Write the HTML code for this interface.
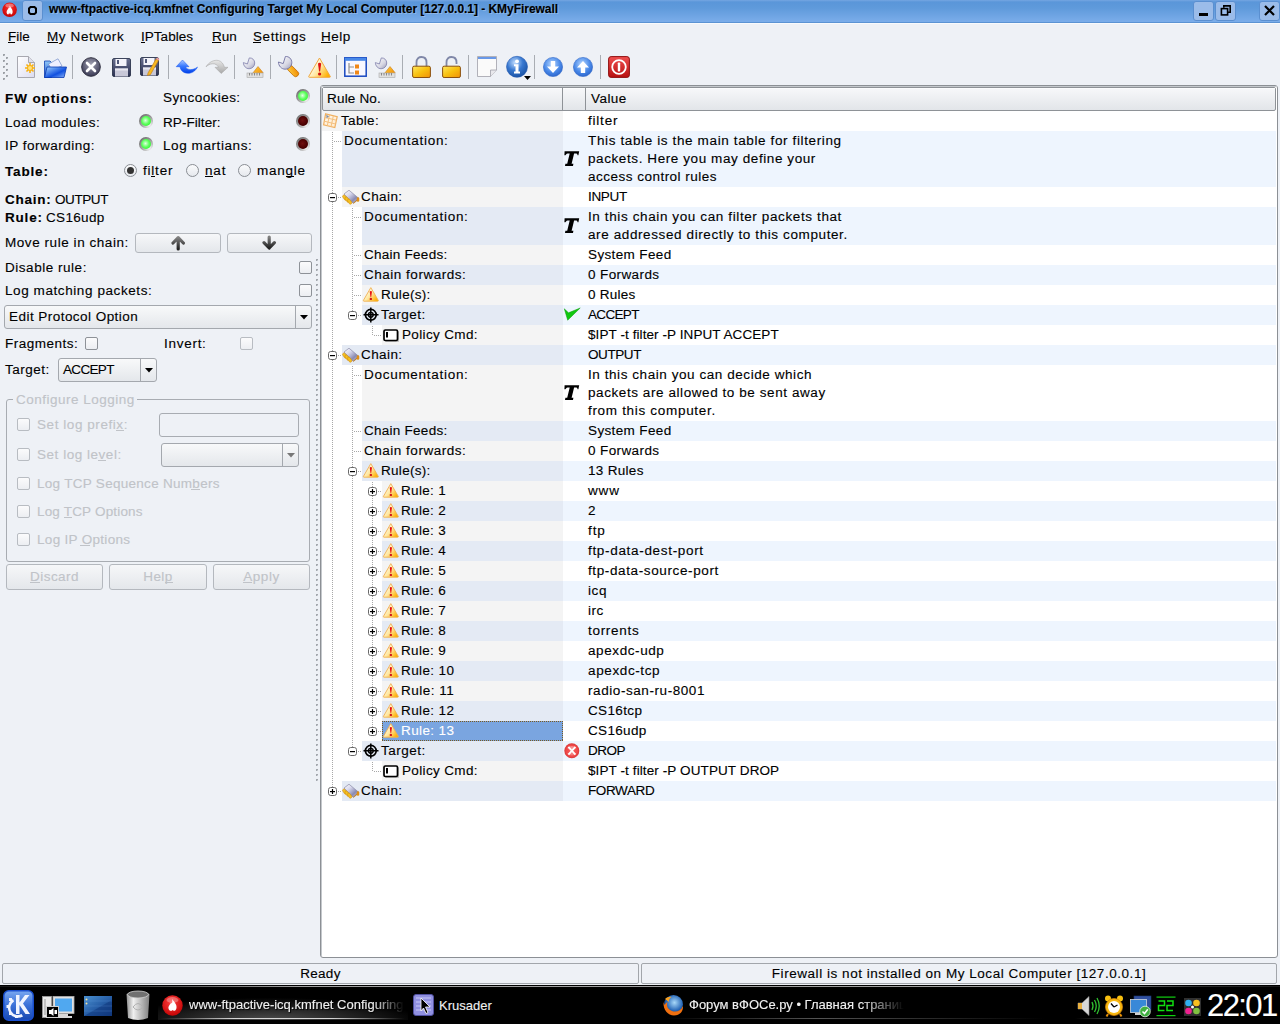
<!DOCTYPE html><html><head><meta charset="utf-8"><style>html,body{margin:0;padding:0;width:1280px;height:1024px;overflow:hidden;background:#eef1f6;font-family:"Liberation Sans",sans-serif;position:relative}div,svg{position:absolute}div{-webkit-text-stroke:0.12px currentColor}</style></head><body>
<div style="position:absolute;left:0px;top:0px;width:1280px;height:22px;background:linear-gradient(#75a6e2 0px,#5a96d9 2px,#5f9adb 8px,#7badea 22px)"></div>
<div style="position:absolute;left:0px;top:22px;width:1280px;height:1px;background:#5b93d3"></div>
<div style="position:absolute;left:0px;top:23px;width:1280px;height:1px;background:#f9fafc"></div>
<svg style="position:absolute;left:2px;top:2px" width="16" height="16" viewBox="0 0 16 16"><defs><radialGradient id="rg1" cx="0.5" cy="0.35" r="0.7"><stop offset="0" stop-color="#ff3030"/><stop offset="1" stop-color="#c00000"/></radialGradient></defs><circle cx="7.6" cy="7.8" r="7.3" fill="url(#rg1)"/><ellipse cx="7.6" cy="3.6" rx="4.2" ry="2" fill="#fff" opacity="0.35"/><path d="M7.6 3.6 C8.8 6 11 7.5 10.6 10.5 C10.3 12.5 9 12.8 8.4 12 L8.2 10.5 L7.6 12.2 L7 10.5 L6.8 12 C6.2 12.8 4.9 12.5 4.6 10.5 C4.3 8 6.5 7 6.8 5.5 C7.2 6.5 7.8 5.5 7.6 3.6Z" fill="#fff"/></svg>
<div style="position:absolute;left:22px;top:0px;width:21px;height:21px;background:#9bbce9;border:1px solid #5a8fd0;border-radius:3px;box-sizing:border-box"></div>
<svg style="position:absolute;left:28px;top:6px" width="9" height="9" viewBox="0 0 9 9"><path d="M2.5 1H6.5L8 2.5V6.5L6.5 8H2.5L1 6.5V2.5Z" fill="none" stroke="#000" stroke-width="2"/></svg>
<div style="position:absolute;left:49.00px;top:1.03px;font-size:12px;line-height:16px;font-weight:bold;color:#000;letter-spacing:0.000px;white-space:pre;letter-spacing:-0.04px;text-shadow:1px 1px 0 rgba(255,255,255,0.25)">www-ftpactive-icq.kmfnet Configuring Target My Local Computer [127.0.0.1] - KMyFirewall</div>
<div style="position:absolute;left:1193px;top:1px;width:21px;height:20px;background:#9bbce9;border:1px solid #5a8fd0;border-radius:3px;box-sizing:border-box"></div>
<div style="position:absolute;left:1215px;top:1px;width:21px;height:20px;background:#9bbce9;border:1px solid #5a8fd0;border-radius:3px;box-sizing:border-box"></div>
<div style="position:absolute;left:1259px;top:1px;width:21px;height:20px;background:#9bbce9;border:1px solid #5a8fd0;border-radius:3px;box-sizing:border-box"></div>
<div style="position:absolute;left:1199px;top:13px;width:9px;height:3px;background:#000"></div>
<svg style="position:absolute;left:1220px;top:5px" width="12" height="11" viewBox="0 0 12 11"><path d="M3.8 2.8V0.9H10.2V7.2H8" fill="none" stroke="#000" stroke-width="1.6"/><rect x="1.4" y="3.6" width="6.2" height="6.3" fill="none" stroke="#000" stroke-width="1.6"/></svg>
<svg style="position:absolute;left:1264px;top:5px" width="11" height="11" viewBox="0 0 11 11"><path d="M1 1L10 10M10 1L1 10" stroke="#000" stroke-width="2.2"/></svg>
<div style="position:absolute;left:8.00px;top:28.53px;font-size:13.52px;line-height:16px;font-weight:normal;color:#000;letter-spacing:-0.004px;white-space:pre;">File</div>
<div style="position:absolute;left:47.00px;top:28.53px;font-size:13.52px;line-height:16px;font-weight:normal;color:#000;letter-spacing:0.594px;white-space:pre;">My Network</div>
<div style="position:absolute;left:141.00px;top:28.53px;font-size:13.52px;line-height:16px;font-weight:normal;color:#000;letter-spacing:0.027px;white-space:pre;">IPTables</div>
<div style="position:absolute;left:212.00px;top:28.53px;font-size:13.52px;line-height:16px;font-weight:normal;color:#000;letter-spacing:0.042px;white-space:pre;">Run</div>
<div style="position:absolute;left:253.00px;top:28.53px;font-size:13.52px;line-height:16px;font-weight:normal;color:#000;letter-spacing:0.559px;white-space:pre;">Settings</div>
<div style="position:absolute;left:321.00px;top:28.53px;font-size:13.52px;line-height:16px;font-weight:normal;color:#000;letter-spacing:0.461px;white-space:pre;">Help</div>
<div style="position:absolute;left:8px;top:42px;width:7px;height:1px;background:#000"></div>
<div style="position:absolute;left:47px;top:42px;width:11px;height:1px;background:#000"></div>
<div style="position:absolute;left:141px;top:42px;width:4px;height:1px;background:#000"></div>
<div style="position:absolute;left:212px;top:42px;width:9px;height:1px;background:#000"></div>
<div style="position:absolute;left:253px;top:42px;width:8px;height:1px;background:#000"></div>
<div style="position:absolute;left:321px;top:42px;width:10px;height:1px;background:#000"></div>
<div style="position:absolute;left:72px;top:55px;width:1px;height:24px;background:#a9adb3"></div>
<div style="position:absolute;left:168px;top:55px;width:1px;height:24px;background:#a9adb3"></div>
<div style="position:absolute;left:234px;top:55px;width:1px;height:24px;background:#a9adb3"></div>
<div style="position:absolute;left:270px;top:55px;width:1px;height:24px;background:#a9adb3"></div>
<div style="position:absolute;left:336px;top:55px;width:1px;height:24px;background:#a9adb3"></div>
<div style="position:absolute;left:402px;top:55px;width:1px;height:24px;background:#a9adb3"></div>
<div style="position:absolute;left:468px;top:55px;width:1px;height:24px;background:#a9adb3"></div>
<div style="position:absolute;left:534px;top:55px;width:1px;height:24px;background:#a9adb3"></div>
<div style="position:absolute;left:600px;top:55px;width:1px;height:24px;background:#a9adb3"></div>
<svg style="position:absolute;left:17px;top:56px;overflow:visible" width="18" height="22" viewBox="0 0 18 22"><defs><linearGradient id="g1" x1="0" y1="0" x2="1" y2="1"><stop offset="0" stop-color="#ffffff"/><stop offset="1" stop-color="#dcdcf0"/></linearGradient></defs><path d="M0.5 0.5 H11.5 L17.5 6.5 V21.5 H0.5Z" fill="url(#g1)" stroke="#a8a8b0"/><path d="M11.5 0.5 V6.5 H17.5" fill="#e0e0ea" stroke="#a8a8b0"/><g transform="translate(13,12)"><circle r="3" fill="#f8c020"/><path d="M0 -5V5M-5 0H5M-3.5 -3.5L3.5 3.5M3.5 -3.5L-3.5 3.5" stroke="#f8b010" stroke-width="1.6"/><circle r="2" fill="#ffe080"/></g></svg>
<svg style="position:absolute;left:44px;top:58px;overflow:visible" width="23" height="20" viewBox="0 0 23 20"><defs><linearGradient id="g2" x1="0" y1="0" x2="0" y2="1"><stop offset="0" stop-color="#90c8f8"/><stop offset="1" stop-color="#1848c8"/></linearGradient><linearGradient id="g3" x1="0" y1="0" x2="1" y2="1"><stop offset="0" stop-color="#a8d8ff"/><stop offset="0.6" stop-color="#1050e0"/><stop offset="1" stop-color="#90b8f8"/></linearGradient></defs><path d="M0.5 3 H6 L7.5 4.5 V19.5 H0.5Z" fill="url(#g2)" stroke="#1040b0" stroke-width="0.8"/><path d="M4.5 6 L14 0.8 L18 8 L8 12Z" fill="#f0f0ff" stroke="#6080c0" stroke-width="0.6"/><path d="M3 9 H22.5 L20 19.5 H0.5Z" fill="url(#g3)" stroke="#0838b0" stroke-width="0.8"/></svg>
<svg style="position:absolute;left:81px;top:57px;overflow:visible" width="20" height="20" viewBox="0 0 20 20"><defs><radialGradient id="g4" cx="0.5" cy="0.35" r="0.6"><stop offset="0" stop-color="#a0a0b0"/><stop offset="1" stop-color="#40405a"/></radialGradient></defs><circle cx="10" cy="10" r="9.3" fill="url(#g4)" stroke="#303040" stroke-width="1"/><path d="M6 6L14 14M14 6L6 14" stroke="#fff" stroke-width="2.6" stroke-linecap="round"/></svg>
<svg style="position:absolute;left:112px;top:58px;overflow:visible" width="19" height="20" viewBox="0 0 19 20"><defs><linearGradient id="g5" x1="0" y1="0" x2="0" y2="1"><stop offset="0" stop-color="#6a7090"/><stop offset="1" stop-color="#2a3050"/></linearGradient></defs><rect x="0.5" y="0.5" width="18" height="18" rx="1.5" fill="url(#g5)" stroke="#202840" stroke-width="0.8"/><rect x="3.5" y="1" width="11" height="7" fill="#f4f4fa"/><rect x="5" y="2" width="2" height="4" fill="#505878"/><rect x="3" y="10.5" width="13" height="8" fill="#c8c8d8"/><rect x="3" y="10.5" width="13" height="2" fill="#e8e8f0"/></svg>
<svg style="position:absolute;left:140px;top:57px;overflow:visible" width="19" height="20" viewBox="0 0 19 20"><defs><linearGradient id="g6" x1="0" y1="0" x2="0" y2="1"><stop offset="0" stop-color="#6a7090"/><stop offset="1" stop-color="#2a3050"/></linearGradient></defs><rect x="0.5" y="0.5" width="18" height="18" rx="1.5" fill="url(#g6)" stroke="#202840" stroke-width="0.8"/><rect x="3.5" y="1" width="11" height="7" fill="#f4f4fa"/><rect x="5" y="2" width="2" height="4" fill="#505878"/><rect x="3" y="10.5" width="13" height="8" fill="#c8c8d8"/><rect x="3" y="10.5" width="13" height="2" fill="#e8e8f0"/><path d="M8 16 L16 2 L18.5 3.5 L10.5 17.5 L7.5 18.5Z" fill="#f8b820" stroke="#c07810" stroke-width="0.6"/><path d="M16 2 L17 0.5 L19.5 2 L18.5 3.5Z" fill="#f0a0a0"/></svg>
<svg style="position:absolute;left:176px;top:60px;overflow:visible" width="22" height="14" viewBox="0 0 22 14"><defs><linearGradient id="g7" x1="0" y1="0" x2="0" y2="1"><stop offset="0" stop-color="#b0ccff"/><stop offset="0.45" stop-color="#3a7aff"/><stop offset="1" stop-color="#0040e8"/></linearGradient></defs><path d="M6.5 0 L13 6.7 H9.5 C10.5 9 13 10 16 9.5 C18.5 9 20.5 8 21.5 7 C19.5 11 16 13.5 11.5 13.3 C7 13 4.5 10 4 6.7 H0.2 Z" fill="url(#g7)" stroke="#1050f0" stroke-width="0.5"/></svg>
<svg style="position:absolute;left:206px;top:60px;overflow:visible" width="23" height="14" viewBox="0 0 23 14"><defs><linearGradient id="g8" x1="0" y1="0" x2="0" y2="1"><stop offset="0" stop-color="#e8e8e8"/><stop offset="1" stop-color="#a8a8a8"/></linearGradient></defs><path d="M0 6.8 C3 2 8 -0.5 12.5 0.5 C15.5 1.2 17.5 4 18.5 7.3 H22 L15.2 13.5 L9 7.3 H12.6 C11.5 5 9 3.5 6.5 3.8 C4 4 2 5 0 6.8Z" fill="url(#g8)" stroke="#a0a0a0" stroke-width="0.5"/></svg>
<svg style="position:absolute;left:243px;top:57px;overflow:visible" width="21" height="21" viewBox="0 0 21 21"><defs><linearGradient id="g9" x1="0" y1="0" x2="1" y2="1"><stop offset="0" stop-color="#ffffff"/><stop offset="0.6" stop-color="#d8d8e4"/><stop offset="1" stop-color="#9a9ab8"/></linearGradient><linearGradient id="g10" x1="0" y1="0" x2="1" y2="1"><stop offset="0" stop-color="#ffd040"/><stop offset="1" stop-color="#f08800"/></linearGradient></defs><path d="M9 17 L15 9.5 L20 15.5 L19 18Z" fill="url(#g10)" stroke="#c07010" stroke-width="0.5"/><rect x="4" y="16" width="16" height="4.5" fill="#e0e0e0" stroke="#a8a8a8" stroke-width="0.6"/><path d="M6.5 16v2.5M9 16v2.5M11.5 16v2.5M14 16v2.5M16.5 16v2.5" stroke="#888" stroke-width="1"/><g transform="translate(0,0.5) scale(0.85)"><path d="M0.4 6 L5.2 7.6 L7.4 0.5 C11 0.2 13.8 3 13.8 6.5 C13.8 10.3 10.8 13.2 7.2 13.2 C3.5 13.2 0.6 10 0.4 6Z" fill="url(#g9)" stroke="#7a7aa8" stroke-width="0.9"/></g></svg>
<svg style="position:absolute;left:278px;top:56px;overflow:visible" width="22" height="22" viewBox="0 0 22 22"><defs><linearGradient id="g11" x1="0" y1="0" x2="1" y2="1"><stop offset="0" stop-color="#ffffff"/><stop offset="0.6" stop-color="#d8d8e4"/><stop offset="1" stop-color="#9a9ab8"/></linearGradient><linearGradient id="g12" x1="0" y1="0" x2="1" y2="1"><stop offset="0" stop-color="#ffd040"/><stop offset="1" stop-color="#f08800"/></linearGradient></defs><rect x="-2.9" y="0" width="5.8" height="13.5" rx="2.9" transform="translate(10.2,10.2) rotate(-45)" fill="url(#g12)" stroke="#c06a00" stroke-width="0.8"/><path d="M0.4 6 L5.2 7.6 L7.4 0.5 C11 0.2 13.8 3 13.8 6.5 C13.8 10.3 10.8 13.2 7.2 13.2 C3.5 13.2 0.6 10 0.4 6Z" fill="url(#g11)" stroke="#7070a0" stroke-width="0.9"/></svg>
<svg style="position:absolute;left:308px;top:57px;overflow:visible" width="23" height="21" viewBox="0 0 23 21"><defs><linearGradient id="g13" x1="0.1" y1="0.4" x2="0.9" y2="0.9"><stop offset="0" stop-color="#fffef6"/><stop offset="0.45" stop-color="#ffe8a0"/><stop offset="1" stop-color="#ffb000"/></linearGradient></defs><path d="M11.5 1 L22.3 19.5 Q22.5 20.3 21.6 20.3 H1.4 Q0.5 20.3 0.7 19.5Z" fill="url(#g13)" stroke="#f0a840" stroke-width="1"/><path d="M10 6.5 Q11.5 5 13.2 6.5 L12.1 14.5 H11.1Z" fill="#e01010"/><circle cx="11.6" cy="17" r="1.6" fill="#d01010"/></svg>
<svg style="position:absolute;left:344px;top:57px;overflow:visible" width="23" height="20" viewBox="0 0 23 20"><rect x="0.8" y="0.8" width="21.4" height="18.4" fill="#f8f8ff" stroke="#1848c0" stroke-width="1.5"/><rect x="0.8" y="0.8" width="21.4" height="3" fill="#4888e8"/><path d="M5 6 V16 H10 M5 10 H10" stroke="#909090" stroke-width="1.2" fill="none"/><rect x="11" y="7.5" width="4" height="4" fill="#f08818"/><rect x="11" y="13.5" width="4" height="4" fill="#f08818"/></svg>
<svg style="position:absolute;left:375px;top:57px;overflow:visible" width="21" height="21" viewBox="0 0 21 21"><defs><linearGradient id="g14" x1="0" y1="0" x2="1" y2="1"><stop offset="0" stop-color="#ffffff"/><stop offset="0.6" stop-color="#d8d8e4"/><stop offset="1" stop-color="#9a9ab8"/></linearGradient><linearGradient id="g15" x1="0" y1="0" x2="1" y2="1"><stop offset="0" stop-color="#ffd040"/><stop offset="1" stop-color="#f08800"/></linearGradient></defs><path d="M9 17 L15 9.5 L20 15.5 L19 18Z" fill="url(#g15)" stroke="#c07010" stroke-width="0.5"/><rect x="4" y="16" width="16" height="4.5" fill="#e0e0e0" stroke="#a8a8a8" stroke-width="0.6"/><path d="M6.5 16v2.5M9 16v2.5M11.5 16v2.5M14 16v2.5M16.5 16v2.5" stroke="#888" stroke-width="1"/><g transform="translate(0,0.5) scale(0.85)"><path d="M0.4 6 L5.2 7.6 L7.4 0.5 C11 0.2 13.8 3 13.8 6.5 C13.8 10.3 10.8 13.2 7.2 13.2 C3.5 13.2 0.6 10 0.4 6Z" fill="url(#g14)" stroke="#7a7aa8" stroke-width="0.9"/></g></svg>
<svg style="position:absolute;left:412px;top:56px;overflow:visible" width="19" height="22" viewBox="0 0 19 22"><defs><linearGradient id="g16" x1="0" y1="0" x2="1" y2="1"><stop offset="0" stop-color="#ffe860"/><stop offset="0.5" stop-color="#f8c010"/><stop offset="1" stop-color="#f09008"/></linearGradient></defs><path d="M4.5 11 V6.5 C4.5 2.5 7 1 9.5 1 C12 1 14.5 2.5 14.5 6.5 V11" fill="none" stroke="#8088a8" stroke-width="1.8"/><rect x="0.6" y="10.2" width="17.8" height="11.3" rx="1.5" fill="url(#g16)" stroke="#8a5010" stroke-width="1"/></svg>
<svg style="position:absolute;left:442px;top:56px;overflow:visible" width="19" height="22" viewBox="0 0 19 22"><defs><linearGradient id="g17" x1="0" y1="0" x2="1" y2="1"><stop offset="0" stop-color="#ffe860"/><stop offset="0.5" stop-color="#f8c010"/><stop offset="1" stop-color="#f09008"/></linearGradient></defs><path d="M4.5 11 V6.5 C4.5 2.5 7 1 9.5 1 C12 1 14.5 2.5 14.5 6.5 V8" fill="none" stroke="#8088a8" stroke-width="1.8"/><rect x="0.6" y="10.2" width="17.8" height="11.3" rx="1.5" fill="url(#g17)" stroke="#8a5010" stroke-width="1"/></svg>
<svg style="position:absolute;left:477px;top:56px;overflow:visible" width="20" height="21" viewBox="0 0 20 21"><path d="M0.5 0.5 H19.5 V14 L13.5 20.5 H0.5Z" fill="#fafafa" stroke="#a0a0a8" stroke-width="0.8"/><rect x="1" y="1" width="18" height="2" fill="#6898e8"/><path d="M13.5 20.5 V14 H19.5" fill="#e8e8ec" stroke="#a0a0a8" stroke-width="0.8"/></svg>
<svg style="position:absolute;left:506px;top:56px;overflow:visible" width="26" height="25" viewBox="0 0 26 25"><defs><radialGradient id="g18" cx="0.4" cy="0.3" r="0.75"><stop offset="0" stop-color="#c0dcff"/><stop offset="0.5" stop-color="#3878d0"/><stop offset="1" stop-color="#1850a0"/></radialGradient></defs><circle cx="11" cy="10.8" r="10.5" fill="url(#g18)" stroke="#2058b0" stroke-width="0.6"/><circle cx="11" cy="5.3" r="1.9" fill="#fff"/><path d="M8 8.3 H12.5 V15.5 H14 V17.5 H8 V15.5 H9.5 V10.3 H8Z" fill="#fff"/><path d="M18 20 H25 L21.5 24Z" fill="#000"/></svg>
<svg style="position:absolute;left:543px;top:57px;overflow:visible" width="20" height="20" viewBox="0 0 20 20"><defs><radialGradient id="g19" cx="0.45" cy="0.35" r="0.7"><stop offset="0" stop-color="#b8d8ff"/><stop offset="0.6" stop-color="#4888e8"/><stop offset="1" stop-color="#2860c8"/></radialGradient></defs><circle cx="10" cy="10" r="9.6" fill="url(#g19)" stroke="#3068c8" stroke-width="0.6"/><path d="M10 16 L16 9.5 H12.2 V4 H7.8 V9.5 H4Z" fill="#fff"/></svg>
<svg style="position:absolute;left:573px;top:57px;overflow:visible" width="20" height="20" viewBox="0 0 20 20"><defs><radialGradient id="g20" cx="0.45" cy="0.35" r="0.7"><stop offset="0" stop-color="#b8d8ff"/><stop offset="0.6" stop-color="#4888e8"/><stop offset="1" stop-color="#2860c8"/></radialGradient></defs><circle cx="10" cy="10" r="9.6" fill="url(#g20)" stroke="#3068c8" stroke-width="0.6"/><path d="M10 4 L16 10.5 H12.2 V16 H7.8 V10.5 H4Z" fill="#fff"/></svg>
<svg style="position:absolute;left:608px;top:56px;overflow:visible" width="22" height="22" viewBox="0 0 22 22"><defs><linearGradient id="g21" x1="0" y1="0" x2="0" y2="1"><stop offset="0" stop-color="#f05050"/><stop offset="1" stop-color="#b81010"/></linearGradient></defs><rect x="0.6" y="0.6" width="20.8" height="20.8" rx="2.5" fill="url(#g21)" stroke="#901010" stroke-width="1"/><circle cx="11" cy="11" r="6.8" fill="none" stroke="#fff" stroke-width="1.8"/><rect x="9.8" y="6.5" width="2.4" height="9" rx="0.8" fill="#fff"/></svg>
<div style="position:absolute;left:3px;top:54px;width:2px;height:2px;background:#9ca0a6"></div>
<div style="position:absolute;left:4px;top:55px;width:1px;height:1px;background:#b8bcc2"></div>
<div style="position:absolute;left:3px;top:60px;width:2px;height:2px;background:#9ca0a6"></div>
<div style="position:absolute;left:4px;top:61px;width:1px;height:1px;background:#b8bcc2"></div>
<div style="position:absolute;left:3px;top:66px;width:2px;height:2px;background:#9ca0a6"></div>
<div style="position:absolute;left:4px;top:67px;width:1px;height:1px;background:#b8bcc2"></div>
<div style="position:absolute;left:3px;top:72px;width:2px;height:2px;background:#9ca0a6"></div>
<div style="position:absolute;left:4px;top:73px;width:1px;height:1px;background:#b8bcc2"></div>
<div style="position:absolute;left:3px;top:78px;width:2px;height:2px;background:#9ca0a6"></div>
<div style="position:absolute;left:4px;top:79px;width:1px;height:1px;background:#b8bcc2"></div>
<div style="position:absolute;left:6px;top:57px;width:2px;height:2px;background:#9ca0a6"></div>
<div style="position:absolute;left:7px;top:58px;width:1px;height:1px;background:#b8bcc2"></div>
<div style="position:absolute;left:6px;top:63px;width:2px;height:2px;background:#9ca0a6"></div>
<div style="position:absolute;left:7px;top:64px;width:1px;height:1px;background:#b8bcc2"></div>
<div style="position:absolute;left:6px;top:69px;width:2px;height:2px;background:#9ca0a6"></div>
<div style="position:absolute;left:7px;top:70px;width:1px;height:1px;background:#b8bcc2"></div>
<div style="position:absolute;left:6px;top:75px;width:2px;height:2px;background:#9ca0a6"></div>
<div style="position:absolute;left:7px;top:76px;width:1px;height:1px;background:#b8bcc2"></div>
<div style="position:absolute;left:5.00px;top:90.53px;font-size:13.52px;line-height:16px;font-weight:bold;color:#000;letter-spacing:0.889px;white-space:pre;">FW options:</div>
<div style="position:absolute;left:163.00px;top:89.53px;font-size:13.52px;line-height:16px;font-weight:normal;color:#000;letter-spacing:0.419px;white-space:pre;">Syncookies:</div>
<div style="position:absolute;left:5.00px;top:114.53px;font-size:13.52px;line-height:16px;font-weight:normal;color:#000;letter-spacing:0.500px;white-space:pre;">Load modules:</div>
<div style="position:absolute;left:163.00px;top:114.53px;font-size:13.52px;line-height:16px;font-weight:normal;color:#000;letter-spacing:0.056px;white-space:pre;">RP-Filter:</div>
<div style="position:absolute;left:5.00px;top:137.53px;font-size:13.52px;line-height:16px;font-weight:normal;color:#000;letter-spacing:0.499px;white-space:pre;">IP forwarding:</div>
<div style="position:absolute;left:163.00px;top:137.53px;font-size:13.52px;line-height:16px;font-weight:normal;color:#000;letter-spacing:0.576px;white-space:pre;">Log martians:</div>
<div style="position:absolute;left:296px;top:89px;width:14px;height:14px;border-radius:50%;background:radial-gradient(circle at 70% 75%, #ffffff 0, #b8b8b8 35%, #505050 100%)"></div>
<div style="position:absolute;left:298px;top:91px;width:10px;height:10px;border-radius:50%;background:radial-gradient(circle at 45% 45%, #e0ffe0 0, #60ff60 45%, #18e818 100%)"></div>
<div style="position:absolute;left:139px;top:114px;width:14px;height:14px;border-radius:50%;background:radial-gradient(circle at 70% 75%, #ffffff 0, #b8b8b8 35%, #505050 100%)"></div>
<div style="position:absolute;left:141px;top:116px;width:10px;height:10px;border-radius:50%;background:radial-gradient(circle at 45% 45%, #e0ffe0 0, #60ff60 45%, #18e818 100%)"></div>
<div style="position:absolute;left:296px;top:114px;width:14px;height:14px;border-radius:50%;background:radial-gradient(circle at 70% 75%, #ffffff 0, #b8b8b8 35%, #505050 100%)"></div>
<div style="position:absolute;left:298px;top:116px;width:10px;height:10px;border-radius:50%;background:radial-gradient(circle at 45% 45%, #701010 0, #4a0000 60%, #300000 100%)"></div>
<div style="position:absolute;left:139px;top:137px;width:14px;height:14px;border-radius:50%;background:radial-gradient(circle at 70% 75%, #ffffff 0, #b8b8b8 35%, #505050 100%)"></div>
<div style="position:absolute;left:141px;top:139px;width:10px;height:10px;border-radius:50%;background:radial-gradient(circle at 45% 45%, #e0ffe0 0, #60ff60 45%, #18e818 100%)"></div>
<div style="position:absolute;left:296px;top:137px;width:14px;height:14px;border-radius:50%;background:radial-gradient(circle at 70% 75%, #ffffff 0, #b8b8b8 35%, #505050 100%)"></div>
<div style="position:absolute;left:298px;top:139px;width:10px;height:10px;border-radius:50%;background:radial-gradient(circle at 45% 45%, #701010 0, #4a0000 60%, #300000 100%)"></div>
<div style="position:absolute;left:5.00px;top:163.53px;font-size:13.52px;line-height:16px;font-weight:bold;color:#000;letter-spacing:0.828px;white-space:pre;">Table:</div>
<div style="position:absolute;left:124px;top:164px;width:13px;height:13px;border-radius:50%;box-sizing:border-box;border:1px solid #8a8e94;background:linear-gradient(#fafbfc,#e6e9ee)"></div>
<div style="position:absolute;left:127px;top:167px;width:7px;height:7px;border-radius:50%;background:#333"></div>
<div style="position:absolute;left:143.00px;top:162.53px;font-size:13.52px;line-height:16px;font-weight:normal;color:#000;letter-spacing:0.786px;white-space:pre;">filter</div>
<div style="position:absolute;left:151px;top:176px;width:4px;height:1px;background:#000"></div>
<div style="position:absolute;left:186px;top:164px;width:13px;height:13px;border-radius:50%;box-sizing:border-box;border:1px solid #8a8e94;background:linear-gradient(#fafbfc,#e6e9ee)"></div>
<div style="position:absolute;left:205.00px;top:162.53px;font-size:13.52px;line-height:16px;font-weight:normal;color:#000;letter-spacing:0.839px;white-space:pre;">nat</div>
<div style="position:absolute;left:205px;top:176px;width:8px;height:1px;background:#000"></div>
<div style="position:absolute;left:238px;top:164px;width:13px;height:13px;border-radius:50%;box-sizing:border-box;border:1px solid #8a8e94;background:linear-gradient(#fafbfc,#e6e9ee)"></div>
<div style="position:absolute;left:257.00px;top:162.53px;font-size:13.52px;line-height:16px;font-weight:normal;color:#000;letter-spacing:0.732px;white-space:pre;">mangle</div>
<div style="position:absolute;left:286px;top:176px;width:8px;height:1px;background:#000"></div>
<div style="position:absolute;left:5.00px;top:191.53px;font-size:13.52px;line-height:16px;font-weight:bold;color:#000;letter-spacing:0.740px;white-space:pre;">Chain:</div>
<div style="position:absolute;left:55.00px;top:191.53px;font-size:13.52px;line-height:16px;font-weight:normal;color:#000;letter-spacing:-0.430px;white-space:pre;">OUTPUT</div>
<div style="position:absolute;left:5.00px;top:209.53px;font-size:13.52px;line-height:16px;font-weight:bold;color:#000;letter-spacing:0.791px;white-space:pre;">Rule:</div>
<div style="position:absolute;left:46.00px;top:209.53px;font-size:13.52px;line-height:16px;font-weight:normal;color:#000;letter-spacing:0.319px;white-space:pre;">CS16udp</div>
<div style="position:absolute;left:5.00px;top:234.53px;font-size:13.52px;line-height:16px;font-weight:normal;color:#000;letter-spacing:0.548px;white-space:pre;">Move rule in chain:</div>
<div style="position:absolute;left:135px;top:233px;width:86px;height:20px;border:1px solid #b4b8be;border-radius:3px;box-sizing:border-box;background:linear-gradient(#f6f7f9,#e4e7eb);"></div>
<div style="position:absolute;left:227px;top:233px;width:85px;height:20px;border:1px solid #b4b8be;border-radius:3px;box-sizing:border-box;background:linear-gradient(#f6f7f9,#e4e7eb);"></div>
<svg style="position:absolute;left:171px;top:235px" width="15" height="16" viewBox="0 0 15 16"><defs><linearGradient id="arw" x1="0" y1="0" x2="0" y2="1"><stop offset="0" stop-color="#808080"/><stop offset="1" stop-color="#202020"/></linearGradient></defs><path d="M7.2 3V14M2 8L7.2 2.6L12.4 8" fill="none" stroke="url(#arw)" stroke-width="3.2" stroke-linecap="round" stroke-linejoin="round"/></svg>
<svg style="position:absolute;left:262px;top:235px" width="15" height="16" viewBox="0 0 15 16"><path d="M7.2 2V12.6M2 7.6L7.2 13L12.4 7.6" fill="none" stroke="url(#arw)" stroke-width="3.2" stroke-linecap="round" stroke-linejoin="round"/></svg>
<div style="position:absolute;left:5.00px;top:259.53px;font-size:13.52px;line-height:16px;font-weight:normal;color:#000;letter-spacing:0.523px;white-space:pre;">Disable rule:</div>
<div style="position:absolute;left:299px;top:261px;width:13px;height:13px;border:1px solid #8e9298;border-radius:2px;box-sizing:border-box;background:linear-gradient(#fbfbfc,#eceef2)"></div>
<div style="position:absolute;left:5.00px;top:282.53px;font-size:13.52px;line-height:16px;font-weight:normal;color:#000;letter-spacing:0.575px;white-space:pre;">Log matching packets:</div>
<div style="position:absolute;left:299px;top:284px;width:13px;height:13px;border:1px solid #8e9298;border-radius:2px;box-sizing:border-box;background:linear-gradient(#fbfbfc,#eceef2)"></div>
<div style="position:absolute;left:4px;top:305px;width:308px;height:24px;border:1px solid #a4a8ae;border-radius:3px;box-sizing:border-box;background:linear-gradient(#f8f9fa,#e4e7eb)"></div>
<div style="position:absolute;left:295px;top:306px;width:1px;height:22px;background:#a4a8ae"></div>
<svg style="position:absolute;left:299.5px;top:315.0px" width="8" height="5" viewBox="0 0 8 5"><path d="M0 0H8L4 4.5Z" fill="#000"/></svg>
<div style="position:absolute;left:9.00px;top:308.53px;font-size:13.52px;line-height:16px;font-weight:normal;color:#000;letter-spacing:0.450px;white-space:pre;">Edit Protocol Option</div>
<div style="position:absolute;left:5.00px;top:335.53px;font-size:13.52px;line-height:16px;font-weight:normal;color:#000;letter-spacing:0.487px;white-space:pre;">Fragments:</div>
<div style="position:absolute;left:85px;top:337px;width:13px;height:13px;border:1px solid #8e9298;border-radius:2px;box-sizing:border-box;background:linear-gradient(#fbfbfc,#eceef2)"></div>
<div style="position:absolute;left:164.00px;top:335.53px;font-size:13.52px;line-height:16px;font-weight:normal;color:#000;letter-spacing:0.717px;white-space:pre;">Invert:</div>
<div style="position:absolute;left:240px;top:337px;width:13px;height:13px;border:1px solid #b8bcc2;border-radius:2px;box-sizing:border-box;background:linear-gradient(#fbfbfc,#eceef2)"></div>
<div style="position:absolute;left:5.00px;top:361.53px;font-size:13.52px;line-height:16px;font-weight:normal;color:#000;letter-spacing:0.469px;white-space:pre;">Target:</div>
<div style="position:absolute;left:58px;top:358px;width:99px;height:24px;border:1px solid #a4a8ae;border-radius:3px;box-sizing:border-box;background:linear-gradient(#f8f9fa,#e4e7eb)"></div>
<div style="position:absolute;left:140px;top:359px;width:1px;height:22px;background:#a4a8ae"></div>
<svg style="position:absolute;left:144.5px;top:368.0px" width="8" height="5" viewBox="0 0 8 5"><path d="M0 0H8L4 4.5Z" fill="#000"/></svg>
<div style="position:absolute;left:63.00px;top:361.53px;font-size:13.52px;line-height:16px;font-weight:normal;color:#000;letter-spacing:-0.669px;white-space:pre;">ACCEPT</div>
<div style="position:absolute;left:6px;top:399px;width:304px;height:163px;border:1px solid #a8acb2;border-radius:3px;box-sizing:border-box"></div>
<div style="position:absolute;left:13px;top:392px;width:124px;height:12px;background:#eef1f6"></div>
<div style="position:absolute;left:16.00px;top:391.53px;font-size:13.52px;line-height:16px;font-weight:normal;color:#c0c3c8;letter-spacing:0.485px;white-space:pre;">Configure Logging</div>
<div style="position:absolute;left:17px;top:418px;width:13px;height:13px;border:1px solid #b8bcc2;border-radius:2px;box-sizing:border-box;background:linear-gradient(#fbfbfc,#eceef2)"></div>
<div style="position:absolute;left:37.00px;top:416.53px;font-size:13.52px;line-height:16px;font-weight:normal;color:#c0c3c8;letter-spacing:0.557px;white-space:pre;">Set log prefix:</div>
<div style="position:absolute;left:116px;top:430px;width:8px;height:1px;background:#c0c3c8"></div>
<div style="position:absolute;left:159px;top:413px;width:140px;height:24px;border:1px solid #a8acb2;border-radius:3px;box-sizing:border-box;background:#eef1f6"></div>
<div style="position:absolute;left:17px;top:448px;width:13px;height:13px;border:1px solid #b8bcc2;border-radius:2px;box-sizing:border-box;background:linear-gradient(#fbfbfc,#eceef2)"></div>
<div style="position:absolute;left:37.00px;top:446.53px;font-size:13.52px;line-height:16px;font-weight:normal;color:#c0c3c8;letter-spacing:0.523px;white-space:pre;">Set log level:</div>
<div style="position:absolute;left:98px;top:460px;width:8px;height:1px;background:#c0c3c8"></div>
<div style="position:absolute;left:161px;top:443px;width:138px;height:24px;border:1px solid #a4a8ae;border-radius:3px;box-sizing:border-box;background:linear-gradient(#f8f9fa,#e4e7eb)"></div>
<div style="position:absolute;left:282px;top:444px;width:1px;height:22px;background:#a4a8ae"></div>
<svg style="position:absolute;left:286.5px;top:453.0px" width="8" height="5" viewBox="0 0 8 5"><path d="M0 0H8L4 4.5Z" fill="#777"/></svg>
<div style="position:absolute;left:17px;top:477px;width:13px;height:13px;border:1px solid #b8bcc2;border-radius:2px;box-sizing:border-box;background:linear-gradient(#fbfbfc,#eceef2)"></div>
<div style="position:absolute;left:37.00px;top:475.53px;font-size:13.52px;line-height:16px;font-weight:normal;color:#c0c3c8;letter-spacing:0.280px;white-space:pre;">Log TCP Sequence Numbers</div>
<div style="position:absolute;left:191px;top:489px;width:9px;height:1px;background:#c0c3c8"></div>
<div style="position:absolute;left:17px;top:505px;width:13px;height:13px;border:1px solid #b8bcc2;border-radius:2px;box-sizing:border-box;background:linear-gradient(#fbfbfc,#eceef2)"></div>
<div style="position:absolute;left:37.00px;top:503.53px;font-size:13.52px;line-height:16px;font-weight:normal;color:#c0c3c8;letter-spacing:0.170px;white-space:pre;">Log TCP Options</div>
<div style="position:absolute;left:64px;top:517px;width:8px;height:1px;background:#c0c3c8"></div>
<div style="position:absolute;left:17px;top:533px;width:13px;height:13px;border:1px solid #b8bcc2;border-radius:2px;box-sizing:border-box;background:linear-gradient(#fbfbfc,#eceef2)"></div>
<div style="position:absolute;left:37.00px;top:531.53px;font-size:13.52px;line-height:16px;font-weight:normal;color:#c0c3c8;letter-spacing:0.296px;white-space:pre;">Log IP Options</div>
<div style="position:absolute;left:80px;top:545px;width:10px;height:1px;background:#c0c3c8"></div>
<div style="position:absolute;left:6px;top:564px;width:97px;height:26px;border:1px solid #b4b8be;border-radius:3px;box-sizing:border-box;background:linear-gradient(#f6f7f9,#e4e7eb);border-color:#b4b8be"></div>
<div style="position:absolute;left:30.07px;top:568.53px;font-size:13.52px;line-height:16px;font-weight:normal;color:#c0c3c8;letter-spacing:0.433px;white-space:pre;">Discard</div>
<div style="position:absolute;left:30px;top:582px;width:10px;height:1px;background:#c0c3c8"></div>
<div style="position:absolute;left:109px;top:564px;width:98px;height:26px;border:1px solid #b4b8be;border-radius:3px;box-sizing:border-box;background:linear-gradient(#f6f7f9,#e4e7eb);border-color:#b4b8be"></div>
<div style="position:absolute;left:143.18px;top:568.53px;font-size:13.52px;line-height:16px;font-weight:normal;color:#c0c3c8;letter-spacing:0.461px;white-space:pre;">Help</div>
<div style="position:absolute;left:165px;top:582px;width:8px;height:1px;background:#c0c3c8"></div>
<div style="position:absolute;left:213px;top:564px;width:97px;height:26px;border:1px solid #b4b8be;border-radius:3px;box-sizing:border-box;background:linear-gradient(#f6f7f9,#e4e7eb);border-color:#b4b8be"></div>
<div style="position:absolute;left:243.16px;top:568.53px;font-size:13.52px;line-height:16px;font-weight:normal;color:#c0c3c8;letter-spacing:0.575px;white-space:pre;">Apply</div>
<div style="position:absolute;left:243px;top:582px;width:9px;height:1px;background:#c0c3c8"></div>
<div style="position:absolute;left:316px;top:259px;width:2px;height:2px;background:#a4a8ae"></div>
<div style="position:absolute;left:317px;top:260px;width:1px;height:1px;background:#c8ccd2"></div>
<div style="position:absolute;left:316px;top:264px;width:2px;height:2px;background:#a4a8ae"></div>
<div style="position:absolute;left:317px;top:265px;width:1px;height:1px;background:#c8ccd2"></div>
<div style="position:absolute;left:316px;top:269px;width:2px;height:2px;background:#a4a8ae"></div>
<div style="position:absolute;left:317px;top:270px;width:1px;height:1px;background:#c8ccd2"></div>
<div style="position:absolute;left:316px;top:274px;width:2px;height:2px;background:#a4a8ae"></div>
<div style="position:absolute;left:317px;top:275px;width:1px;height:1px;background:#c8ccd2"></div>
<div style="position:absolute;left:316px;top:279px;width:2px;height:2px;background:#a4a8ae"></div>
<div style="position:absolute;left:317px;top:280px;width:1px;height:1px;background:#c8ccd2"></div>
<div style="position:absolute;left:316px;top:284px;width:2px;height:2px;background:#a4a8ae"></div>
<div style="position:absolute;left:317px;top:285px;width:1px;height:1px;background:#c8ccd2"></div>
<div style="position:absolute;left:316px;top:289px;width:2px;height:2px;background:#a4a8ae"></div>
<div style="position:absolute;left:317px;top:290px;width:1px;height:1px;background:#c8ccd2"></div>
<div style="position:absolute;left:316px;top:294px;width:2px;height:2px;background:#a4a8ae"></div>
<div style="position:absolute;left:317px;top:295px;width:1px;height:1px;background:#c8ccd2"></div>
<div style="position:absolute;left:316px;top:299px;width:2px;height:2px;background:#a4a8ae"></div>
<div style="position:absolute;left:317px;top:300px;width:1px;height:1px;background:#c8ccd2"></div>
<div style="position:absolute;left:316px;top:304px;width:2px;height:2px;background:#a4a8ae"></div>
<div style="position:absolute;left:317px;top:305px;width:1px;height:1px;background:#c8ccd2"></div>
<div style="position:absolute;left:316px;top:309px;width:2px;height:2px;background:#a4a8ae"></div>
<div style="position:absolute;left:317px;top:310px;width:1px;height:1px;background:#c8ccd2"></div>
<div style="position:absolute;left:316px;top:314px;width:2px;height:2px;background:#a4a8ae"></div>
<div style="position:absolute;left:317px;top:315px;width:1px;height:1px;background:#c8ccd2"></div>
<div style="position:absolute;left:316px;top:319px;width:2px;height:2px;background:#a4a8ae"></div>
<div style="position:absolute;left:317px;top:320px;width:1px;height:1px;background:#c8ccd2"></div>
<div style="position:absolute;left:316px;top:324px;width:2px;height:2px;background:#a4a8ae"></div>
<div style="position:absolute;left:317px;top:325px;width:1px;height:1px;background:#c8ccd2"></div>
<div style="position:absolute;left:316px;top:329px;width:2px;height:2px;background:#a4a8ae"></div>
<div style="position:absolute;left:317px;top:330px;width:1px;height:1px;background:#c8ccd2"></div>
<div style="position:absolute;left:316px;top:334px;width:2px;height:2px;background:#a4a8ae"></div>
<div style="position:absolute;left:317px;top:335px;width:1px;height:1px;background:#c8ccd2"></div>
<div style="position:absolute;left:316px;top:339px;width:2px;height:2px;background:#a4a8ae"></div>
<div style="position:absolute;left:317px;top:340px;width:1px;height:1px;background:#c8ccd2"></div>
<div style="position:absolute;left:316px;top:344px;width:2px;height:2px;background:#a4a8ae"></div>
<div style="position:absolute;left:317px;top:345px;width:1px;height:1px;background:#c8ccd2"></div>
<div style="position:absolute;left:316px;top:349px;width:2px;height:2px;background:#a4a8ae"></div>
<div style="position:absolute;left:317px;top:350px;width:1px;height:1px;background:#c8ccd2"></div>
<div style="position:absolute;left:316px;top:354px;width:2px;height:2px;background:#a4a8ae"></div>
<div style="position:absolute;left:317px;top:355px;width:1px;height:1px;background:#c8ccd2"></div>
<div style="position:absolute;left:316px;top:359px;width:2px;height:2px;background:#a4a8ae"></div>
<div style="position:absolute;left:317px;top:360px;width:1px;height:1px;background:#c8ccd2"></div>
<div style="position:absolute;left:316px;top:364px;width:2px;height:2px;background:#a4a8ae"></div>
<div style="position:absolute;left:317px;top:365px;width:1px;height:1px;background:#c8ccd2"></div>
<div style="position:absolute;left:316px;top:369px;width:2px;height:2px;background:#a4a8ae"></div>
<div style="position:absolute;left:317px;top:370px;width:1px;height:1px;background:#c8ccd2"></div>
<div style="position:absolute;left:316px;top:374px;width:2px;height:2px;background:#a4a8ae"></div>
<div style="position:absolute;left:317px;top:375px;width:1px;height:1px;background:#c8ccd2"></div>
<div style="position:absolute;left:316px;top:379px;width:2px;height:2px;background:#a4a8ae"></div>
<div style="position:absolute;left:317px;top:380px;width:1px;height:1px;background:#c8ccd2"></div>
<div style="position:absolute;left:316px;top:384px;width:2px;height:2px;background:#a4a8ae"></div>
<div style="position:absolute;left:317px;top:385px;width:1px;height:1px;background:#c8ccd2"></div>
<div style="position:absolute;left:316px;top:389px;width:2px;height:2px;background:#a4a8ae"></div>
<div style="position:absolute;left:317px;top:390px;width:1px;height:1px;background:#c8ccd2"></div>
<div style="position:absolute;left:316px;top:394px;width:2px;height:2px;background:#a4a8ae"></div>
<div style="position:absolute;left:317px;top:395px;width:1px;height:1px;background:#c8ccd2"></div>
<div style="position:absolute;left:316px;top:399px;width:2px;height:2px;background:#a4a8ae"></div>
<div style="position:absolute;left:317px;top:400px;width:1px;height:1px;background:#c8ccd2"></div>
<div style="position:absolute;left:316px;top:404px;width:2px;height:2px;background:#a4a8ae"></div>
<div style="position:absolute;left:317px;top:405px;width:1px;height:1px;background:#c8ccd2"></div>
<div style="position:absolute;left:316px;top:409px;width:2px;height:2px;background:#a4a8ae"></div>
<div style="position:absolute;left:317px;top:410px;width:1px;height:1px;background:#c8ccd2"></div>
<div style="position:absolute;left:316px;top:414px;width:2px;height:2px;background:#a4a8ae"></div>
<div style="position:absolute;left:317px;top:415px;width:1px;height:1px;background:#c8ccd2"></div>
<div style="position:absolute;left:316px;top:419px;width:2px;height:2px;background:#a4a8ae"></div>
<div style="position:absolute;left:317px;top:420px;width:1px;height:1px;background:#c8ccd2"></div>
<div style="position:absolute;left:316px;top:424px;width:2px;height:2px;background:#a4a8ae"></div>
<div style="position:absolute;left:317px;top:425px;width:1px;height:1px;background:#c8ccd2"></div>
<div style="position:absolute;left:316px;top:429px;width:2px;height:2px;background:#a4a8ae"></div>
<div style="position:absolute;left:317px;top:430px;width:1px;height:1px;background:#c8ccd2"></div>
<div style="position:absolute;left:316px;top:434px;width:2px;height:2px;background:#a4a8ae"></div>
<div style="position:absolute;left:317px;top:435px;width:1px;height:1px;background:#c8ccd2"></div>
<div style="position:absolute;left:316px;top:439px;width:2px;height:2px;background:#a4a8ae"></div>
<div style="position:absolute;left:317px;top:440px;width:1px;height:1px;background:#c8ccd2"></div>
<div style="position:absolute;left:316px;top:444px;width:2px;height:2px;background:#a4a8ae"></div>
<div style="position:absolute;left:317px;top:445px;width:1px;height:1px;background:#c8ccd2"></div>
<div style="position:absolute;left:316px;top:449px;width:2px;height:2px;background:#a4a8ae"></div>
<div style="position:absolute;left:317px;top:450px;width:1px;height:1px;background:#c8ccd2"></div>
<div style="position:absolute;left:316px;top:454px;width:2px;height:2px;background:#a4a8ae"></div>
<div style="position:absolute;left:317px;top:455px;width:1px;height:1px;background:#c8ccd2"></div>
<div style="position:absolute;left:316px;top:459px;width:2px;height:2px;background:#a4a8ae"></div>
<div style="position:absolute;left:317px;top:460px;width:1px;height:1px;background:#c8ccd2"></div>
<div style="position:absolute;left:316px;top:464px;width:2px;height:2px;background:#a4a8ae"></div>
<div style="position:absolute;left:317px;top:465px;width:1px;height:1px;background:#c8ccd2"></div>
<div style="position:absolute;left:316px;top:469px;width:2px;height:2px;background:#a4a8ae"></div>
<div style="position:absolute;left:317px;top:470px;width:1px;height:1px;background:#c8ccd2"></div>
<div style="position:absolute;left:316px;top:474px;width:2px;height:2px;background:#a4a8ae"></div>
<div style="position:absolute;left:317px;top:475px;width:1px;height:1px;background:#c8ccd2"></div>
<div style="position:absolute;left:316px;top:479px;width:2px;height:2px;background:#a4a8ae"></div>
<div style="position:absolute;left:317px;top:480px;width:1px;height:1px;background:#c8ccd2"></div>
<div style="position:absolute;left:316px;top:484px;width:2px;height:2px;background:#a4a8ae"></div>
<div style="position:absolute;left:317px;top:485px;width:1px;height:1px;background:#c8ccd2"></div>
<div style="position:absolute;left:316px;top:489px;width:2px;height:2px;background:#a4a8ae"></div>
<div style="position:absolute;left:317px;top:490px;width:1px;height:1px;background:#c8ccd2"></div>
<div style="position:absolute;left:316px;top:494px;width:2px;height:2px;background:#a4a8ae"></div>
<div style="position:absolute;left:317px;top:495px;width:1px;height:1px;background:#c8ccd2"></div>
<div style="position:absolute;left:316px;top:499px;width:2px;height:2px;background:#a4a8ae"></div>
<div style="position:absolute;left:317px;top:500px;width:1px;height:1px;background:#c8ccd2"></div>
<div style="position:absolute;left:316px;top:504px;width:2px;height:2px;background:#a4a8ae"></div>
<div style="position:absolute;left:317px;top:505px;width:1px;height:1px;background:#c8ccd2"></div>
<div style="position:absolute;left:316px;top:509px;width:2px;height:2px;background:#a4a8ae"></div>
<div style="position:absolute;left:317px;top:510px;width:1px;height:1px;background:#c8ccd2"></div>
<div style="position:absolute;left:316px;top:514px;width:2px;height:2px;background:#a4a8ae"></div>
<div style="position:absolute;left:317px;top:515px;width:1px;height:1px;background:#c8ccd2"></div>
<div style="position:absolute;left:316px;top:519px;width:2px;height:2px;background:#a4a8ae"></div>
<div style="position:absolute;left:317px;top:520px;width:1px;height:1px;background:#c8ccd2"></div>
<div style="position:absolute;left:316px;top:524px;width:2px;height:2px;background:#a4a8ae"></div>
<div style="position:absolute;left:317px;top:525px;width:1px;height:1px;background:#c8ccd2"></div>
<div style="position:absolute;left:316px;top:529px;width:2px;height:2px;background:#a4a8ae"></div>
<div style="position:absolute;left:317px;top:530px;width:1px;height:1px;background:#c8ccd2"></div>
<div style="position:absolute;left:316px;top:534px;width:2px;height:2px;background:#a4a8ae"></div>
<div style="position:absolute;left:317px;top:535px;width:1px;height:1px;background:#c8ccd2"></div>
<div style="position:absolute;left:316px;top:539px;width:2px;height:2px;background:#a4a8ae"></div>
<div style="position:absolute;left:317px;top:540px;width:1px;height:1px;background:#c8ccd2"></div>
<div style="position:absolute;left:316px;top:544px;width:2px;height:2px;background:#a4a8ae"></div>
<div style="position:absolute;left:317px;top:545px;width:1px;height:1px;background:#c8ccd2"></div>
<div style="position:absolute;left:316px;top:549px;width:2px;height:2px;background:#a4a8ae"></div>
<div style="position:absolute;left:317px;top:550px;width:1px;height:1px;background:#c8ccd2"></div>
<div style="position:absolute;left:316px;top:554px;width:2px;height:2px;background:#a4a8ae"></div>
<div style="position:absolute;left:317px;top:555px;width:1px;height:1px;background:#c8ccd2"></div>
<div style="position:absolute;left:316px;top:559px;width:2px;height:2px;background:#a4a8ae"></div>
<div style="position:absolute;left:317px;top:560px;width:1px;height:1px;background:#c8ccd2"></div>
<div style="position:absolute;left:316px;top:564px;width:2px;height:2px;background:#a4a8ae"></div>
<div style="position:absolute;left:317px;top:565px;width:1px;height:1px;background:#c8ccd2"></div>
<div style="position:absolute;left:316px;top:569px;width:2px;height:2px;background:#a4a8ae"></div>
<div style="position:absolute;left:317px;top:570px;width:1px;height:1px;background:#c8ccd2"></div>
<div style="position:absolute;left:316px;top:574px;width:2px;height:2px;background:#a4a8ae"></div>
<div style="position:absolute;left:317px;top:575px;width:1px;height:1px;background:#c8ccd2"></div>
<div style="position:absolute;left:316px;top:579px;width:2px;height:2px;background:#a4a8ae"></div>
<div style="position:absolute;left:317px;top:580px;width:1px;height:1px;background:#c8ccd2"></div>
<div style="position:absolute;left:316px;top:584px;width:2px;height:2px;background:#a4a8ae"></div>
<div style="position:absolute;left:317px;top:585px;width:1px;height:1px;background:#c8ccd2"></div>
<div style="position:absolute;left:316px;top:589px;width:2px;height:2px;background:#a4a8ae"></div>
<div style="position:absolute;left:317px;top:590px;width:1px;height:1px;background:#c8ccd2"></div>
<div style="position:absolute;left:316px;top:594px;width:2px;height:2px;background:#a4a8ae"></div>
<div style="position:absolute;left:317px;top:595px;width:1px;height:1px;background:#c8ccd2"></div>
<div style="position:absolute;left:316px;top:599px;width:2px;height:2px;background:#a4a8ae"></div>
<div style="position:absolute;left:317px;top:600px;width:1px;height:1px;background:#c8ccd2"></div>
<div style="position:absolute;left:316px;top:604px;width:2px;height:2px;background:#a4a8ae"></div>
<div style="position:absolute;left:317px;top:605px;width:1px;height:1px;background:#c8ccd2"></div>
<div style="position:absolute;left:316px;top:609px;width:2px;height:2px;background:#a4a8ae"></div>
<div style="position:absolute;left:317px;top:610px;width:1px;height:1px;background:#c8ccd2"></div>
<div style="position:absolute;left:316px;top:614px;width:2px;height:2px;background:#a4a8ae"></div>
<div style="position:absolute;left:317px;top:615px;width:1px;height:1px;background:#c8ccd2"></div>
<div style="position:absolute;left:316px;top:619px;width:2px;height:2px;background:#a4a8ae"></div>
<div style="position:absolute;left:317px;top:620px;width:1px;height:1px;background:#c8ccd2"></div>
<div style="position:absolute;left:316px;top:624px;width:2px;height:2px;background:#a4a8ae"></div>
<div style="position:absolute;left:317px;top:625px;width:1px;height:1px;background:#c8ccd2"></div>
<div style="position:absolute;left:316px;top:629px;width:2px;height:2px;background:#a4a8ae"></div>
<div style="position:absolute;left:317px;top:630px;width:1px;height:1px;background:#c8ccd2"></div>
<div style="position:absolute;left:316px;top:634px;width:2px;height:2px;background:#a4a8ae"></div>
<div style="position:absolute;left:317px;top:635px;width:1px;height:1px;background:#c8ccd2"></div>
<div style="position:absolute;left:316px;top:639px;width:2px;height:2px;background:#a4a8ae"></div>
<div style="position:absolute;left:317px;top:640px;width:1px;height:1px;background:#c8ccd2"></div>
<div style="position:absolute;left:316px;top:644px;width:2px;height:2px;background:#a4a8ae"></div>
<div style="position:absolute;left:317px;top:645px;width:1px;height:1px;background:#c8ccd2"></div>
<div style="position:absolute;left:316px;top:649px;width:2px;height:2px;background:#a4a8ae"></div>
<div style="position:absolute;left:317px;top:650px;width:1px;height:1px;background:#c8ccd2"></div>
<div style="position:absolute;left:316px;top:654px;width:2px;height:2px;background:#a4a8ae"></div>
<div style="position:absolute;left:317px;top:655px;width:1px;height:1px;background:#c8ccd2"></div>
<div style="position:absolute;left:316px;top:659px;width:2px;height:2px;background:#a4a8ae"></div>
<div style="position:absolute;left:317px;top:660px;width:1px;height:1px;background:#c8ccd2"></div>
<div style="position:absolute;left:316px;top:664px;width:2px;height:2px;background:#a4a8ae"></div>
<div style="position:absolute;left:317px;top:665px;width:1px;height:1px;background:#c8ccd2"></div>
<div style="position:absolute;left:316px;top:669px;width:2px;height:2px;background:#a4a8ae"></div>
<div style="position:absolute;left:317px;top:670px;width:1px;height:1px;background:#c8ccd2"></div>
<div style="position:absolute;left:316px;top:674px;width:2px;height:2px;background:#a4a8ae"></div>
<div style="position:absolute;left:317px;top:675px;width:1px;height:1px;background:#c8ccd2"></div>
<div style="position:absolute;left:316px;top:679px;width:2px;height:2px;background:#a4a8ae"></div>
<div style="position:absolute;left:317px;top:680px;width:1px;height:1px;background:#c8ccd2"></div>
<div style="position:absolute;left:316px;top:684px;width:2px;height:2px;background:#a4a8ae"></div>
<div style="position:absolute;left:317px;top:685px;width:1px;height:1px;background:#c8ccd2"></div>
<div style="position:absolute;left:316px;top:689px;width:2px;height:2px;background:#a4a8ae"></div>
<div style="position:absolute;left:317px;top:690px;width:1px;height:1px;background:#c8ccd2"></div>
<div style="position:absolute;left:316px;top:694px;width:2px;height:2px;background:#a4a8ae"></div>
<div style="position:absolute;left:317px;top:695px;width:1px;height:1px;background:#c8ccd2"></div>
<div style="position:absolute;left:316px;top:699px;width:2px;height:2px;background:#a4a8ae"></div>
<div style="position:absolute;left:317px;top:700px;width:1px;height:1px;background:#c8ccd2"></div>
<div style="position:absolute;left:316px;top:704px;width:2px;height:2px;background:#a4a8ae"></div>
<div style="position:absolute;left:317px;top:705px;width:1px;height:1px;background:#c8ccd2"></div>
<div style="position:absolute;left:316px;top:709px;width:2px;height:2px;background:#a4a8ae"></div>
<div style="position:absolute;left:317px;top:710px;width:1px;height:1px;background:#c8ccd2"></div>
<div style="position:absolute;left:316px;top:714px;width:2px;height:2px;background:#a4a8ae"></div>
<div style="position:absolute;left:317px;top:715px;width:1px;height:1px;background:#c8ccd2"></div>
<div style="position:absolute;left:316px;top:719px;width:2px;height:2px;background:#a4a8ae"></div>
<div style="position:absolute;left:317px;top:720px;width:1px;height:1px;background:#c8ccd2"></div>
<div style="position:absolute;left:316px;top:724px;width:2px;height:2px;background:#a4a8ae"></div>
<div style="position:absolute;left:317px;top:725px;width:1px;height:1px;background:#c8ccd2"></div>
<div style="position:absolute;left:316px;top:729px;width:2px;height:2px;background:#a4a8ae"></div>
<div style="position:absolute;left:317px;top:730px;width:1px;height:1px;background:#c8ccd2"></div>
<div style="position:absolute;left:316px;top:734px;width:2px;height:2px;background:#a4a8ae"></div>
<div style="position:absolute;left:317px;top:735px;width:1px;height:1px;background:#c8ccd2"></div>
<div style="position:absolute;left:316px;top:739px;width:2px;height:2px;background:#a4a8ae"></div>
<div style="position:absolute;left:317px;top:740px;width:1px;height:1px;background:#c8ccd2"></div>
<div style="position:absolute;left:316px;top:744px;width:2px;height:2px;background:#a4a8ae"></div>
<div style="position:absolute;left:317px;top:745px;width:1px;height:1px;background:#c8ccd2"></div>
<div style="position:absolute;left:316px;top:749px;width:2px;height:2px;background:#a4a8ae"></div>
<div style="position:absolute;left:317px;top:750px;width:1px;height:1px;background:#c8ccd2"></div>
<div style="position:absolute;left:316px;top:754px;width:2px;height:2px;background:#a4a8ae"></div>
<div style="position:absolute;left:317px;top:755px;width:1px;height:1px;background:#c8ccd2"></div>
<div style="position:absolute;left:316px;top:759px;width:2px;height:2px;background:#a4a8ae"></div>
<div style="position:absolute;left:317px;top:760px;width:1px;height:1px;background:#c8ccd2"></div>
<div style="position:absolute;left:316px;top:764px;width:2px;height:2px;background:#a4a8ae"></div>
<div style="position:absolute;left:317px;top:765px;width:1px;height:1px;background:#c8ccd2"></div>
<div style="position:absolute;left:316px;top:769px;width:2px;height:2px;background:#a4a8ae"></div>
<div style="position:absolute;left:317px;top:770px;width:1px;height:1px;background:#c8ccd2"></div>
<div style="position:absolute;left:316px;top:774px;width:2px;height:2px;background:#a4a8ae"></div>
<div style="position:absolute;left:317px;top:775px;width:1px;height:1px;background:#c8ccd2"></div>
<div style="position:absolute;left:316px;top:779px;width:2px;height:2px;background:#a4a8ae"></div>
<div style="position:absolute;left:317px;top:780px;width:1px;height:1px;background:#c8ccd2"></div>
<div style="position:absolute;left:320px;top:85px;width:958px;height:873px;border:1px solid #8c9095;border-radius:3px;box-sizing:border-box;background:#fff"></div>
<div style="position:absolute;left:321px;top:86px;width:956px;height:1px;background:#c4c8cc"></div>
<div style="position:absolute;left:321px;top:86px;width:1px;height:870px;background:#c4c8cc"></div>
<div style="position:absolute;left:322px;top:87px;width:954px;height:24px;background:linear-gradient(#f7f8fa,#e2e5e9);border:1px solid #8e9297;border-radius:2px;box-sizing:border-box"></div>
<div style="position:absolute;left:323px;top:88px;width:952px;height:1px;background:#fbfcfd"></div>
<div style="position:absolute;left:562px;top:88px;width:1px;height:22px;background:#8e9297"></div>
<div style="position:absolute;left:585px;top:88px;width:1px;height:22px;background:#8e9297"></div>
<div style="position:absolute;left:327.00px;top:90.53px;font-size:13.52px;line-height:16px;font-weight:normal;color:#000;letter-spacing:0.176px;white-space:pre;">Rule No.</div>
<div style="position:absolute;left:591.00px;top:90.53px;font-size:13.52px;line-height:16px;font-weight:normal;color:#000;letter-spacing:0.425px;white-space:pre;">Value</div>
<div style="position:absolute;left:322px;top:111px;width:241px;height:20px;background:#f4f4f4"></div>
<div style="position:absolute;left:563px;top:111px;width:713px;height:20px;background:#ffffff"></div>
<div style="position:absolute;left:341.00px;top:112.53px;font-size:13.52px;line-height:16px;font-weight:normal;color:#000;letter-spacing:0.323px;white-space:pre;">Table:</div>
<div style="position:absolute;left:588.00px;top:112.53px;font-size:13.52px;line-height:16px;font-weight:normal;color:#000;letter-spacing:0.786px;white-space:pre;">filter</div>
<div style="position:absolute;left:342px;top:131px;width:221px;height:56px;background:#e4eaf4"></div>
<div style="position:absolute;left:563px;top:131px;width:713px;height:56px;background:#eef5fe"></div>
<div style="position:absolute;left:344.00px;top:132.53px;font-size:13.52px;line-height:16px;font-weight:normal;color:#000;letter-spacing:0.708px;white-space:pre;">Documentation:</div>
<div style="position:absolute;left:588.00px;top:132.53px;font-size:13.52px;line-height:16px;font-weight:normal;color:#000;letter-spacing:0.622px;white-space:pre;">This table is the main table for filtering</div>
<div style="position:absolute;left:588.00px;top:150.53px;font-size:13.52px;line-height:16px;font-weight:normal;color:#000;letter-spacing:0.579px;white-space:pre;">packets. Here you may define your</div>
<div style="position:absolute;left:588.00px;top:168.53px;font-size:13.52px;line-height:16px;font-weight:normal;color:#000;letter-spacing:0.479px;white-space:pre;">access control rules</div>
<div style="position:absolute;left:342px;top:187px;width:221px;height:20px;background:#f4f4f4"></div>
<div style="position:absolute;left:563px;top:187px;width:713px;height:20px;background:#ffffff"></div>
<div style="position:absolute;left:361.00px;top:188.53px;font-size:13.52px;line-height:16px;font-weight:normal;color:#000;letter-spacing:0.406px;white-space:pre;">Chain:</div>
<div style="position:absolute;left:588.00px;top:188.53px;font-size:13.52px;line-height:16px;font-weight:normal;color:#000;letter-spacing:-0.341px;white-space:pre;">INPUT</div>
<div style="position:absolute;left:362px;top:207px;width:201px;height:38px;background:#e4eaf4"></div>
<div style="position:absolute;left:563px;top:207px;width:713px;height:38px;background:#eef5fe"></div>
<div style="position:absolute;left:364.00px;top:208.53px;font-size:13.52px;line-height:16px;font-weight:normal;color:#000;letter-spacing:0.708px;white-space:pre;">Documentation:</div>
<div style="position:absolute;left:588.00px;top:208.53px;font-size:13.52px;line-height:16px;font-weight:normal;color:#000;letter-spacing:0.606px;white-space:pre;">In this chain you can filter packets that</div>
<div style="position:absolute;left:588.00px;top:226.53px;font-size:13.52px;line-height:16px;font-weight:normal;color:#000;letter-spacing:0.598px;white-space:pre;">are addressed directly to this computer.</div>
<div style="position:absolute;left:362px;top:245px;width:201px;height:20px;background:#f4f4f4"></div>
<div style="position:absolute;left:563px;top:245px;width:713px;height:20px;background:#ffffff"></div>
<div style="position:absolute;left:364.00px;top:246.53px;font-size:13.52px;line-height:16px;font-weight:normal;color:#000;letter-spacing:0.254px;white-space:pre;">Chain Feeds:</div>
<div style="position:absolute;left:588.00px;top:246.53px;font-size:13.52px;line-height:16px;font-weight:normal;color:#000;letter-spacing:0.362px;white-space:pre;">System Feed</div>
<div style="position:absolute;left:362px;top:265px;width:201px;height:20px;background:#e4eaf4"></div>
<div style="position:absolute;left:563px;top:265px;width:713px;height:20px;background:#eef5fe"></div>
<div style="position:absolute;left:364.00px;top:266.53px;font-size:13.52px;line-height:16px;font-weight:normal;color:#000;letter-spacing:0.505px;white-space:pre;">Chain forwards:</div>
<div style="position:absolute;left:588.00px;top:266.53px;font-size:13.52px;line-height:16px;font-weight:normal;color:#000;letter-spacing:0.383px;white-space:pre;">0 Forwards</div>
<div style="position:absolute;left:362px;top:285px;width:201px;height:20px;background:#f4f4f4"></div>
<div style="position:absolute;left:563px;top:285px;width:713px;height:20px;background:#ffffff"></div>
<div style="position:absolute;left:381.00px;top:286.53px;font-size:13.52px;line-height:16px;font-weight:normal;color:#000;letter-spacing:0.285px;white-space:pre;">Rule(s):</div>
<div style="position:absolute;left:588.00px;top:286.53px;font-size:13.52px;line-height:16px;font-weight:normal;color:#000;letter-spacing:0.232px;white-space:pre;">0 Rules</div>
<div style="position:absolute;left:362px;top:305px;width:201px;height:20px;background:#e4eaf4"></div>
<div style="position:absolute;left:563px;top:305px;width:713px;height:20px;background:#eef5fe"></div>
<div style="position:absolute;left:381.00px;top:306.53px;font-size:13.52px;line-height:16px;font-weight:normal;color:#000;letter-spacing:0.469px;white-space:pre;">Target:</div>
<div style="position:absolute;left:588.00px;top:306.53px;font-size:13.52px;line-height:16px;font-weight:normal;color:#000;letter-spacing:-0.669px;white-space:pre;">ACCEPT</div>
<div style="position:absolute;left:382px;top:325px;width:181px;height:20px;background:#f4f4f4"></div>
<div style="position:absolute;left:563px;top:325px;width:713px;height:20px;background:#ffffff"></div>
<div style="position:absolute;left:402.00px;top:326.53px;font-size:13.52px;line-height:16px;font-weight:normal;color:#000;letter-spacing:0.341px;white-space:pre;">Policy Cmd:</div>
<div style="position:absolute;left:588.00px;top:326.53px;font-size:13.52px;line-height:16px;font-weight:normal;color:#000;letter-spacing:0.076px;white-space:pre;">$IPT -t filter -P INPUT ACCEPT</div>
<div style="position:absolute;left:342px;top:345px;width:221px;height:20px;background:#e4eaf4"></div>
<div style="position:absolute;left:563px;top:345px;width:713px;height:20px;background:#eef5fe"></div>
<div style="position:absolute;left:361.00px;top:346.53px;font-size:13.52px;line-height:16px;font-weight:normal;color:#000;letter-spacing:0.406px;white-space:pre;">Chain:</div>
<div style="position:absolute;left:588.00px;top:346.53px;font-size:13.52px;line-height:16px;font-weight:normal;color:#000;letter-spacing:-0.430px;white-space:pre;">OUTPUT</div>
<div style="position:absolute;left:362px;top:365px;width:201px;height:56px;background:#f4f4f4"></div>
<div style="position:absolute;left:563px;top:365px;width:713px;height:56px;background:#ffffff"></div>
<div style="position:absolute;left:364.00px;top:366.53px;font-size:13.52px;line-height:16px;font-weight:normal;color:#000;letter-spacing:0.708px;white-space:pre;">Documentation:</div>
<div style="position:absolute;left:588.00px;top:366.53px;font-size:13.52px;line-height:16px;font-weight:normal;color:#000;letter-spacing:0.557px;white-space:pre;">In this chain you can decide which</div>
<div style="position:absolute;left:588.00px;top:384.53px;font-size:13.52px;line-height:16px;font-weight:normal;color:#000;letter-spacing:0.567px;white-space:pre;">packets are allowed to be sent away</div>
<div style="position:absolute;left:588.00px;top:402.53px;font-size:13.52px;line-height:16px;font-weight:normal;color:#000;letter-spacing:0.679px;white-space:pre;">from this computer.</div>
<div style="position:absolute;left:362px;top:421px;width:201px;height:20px;background:#e4eaf4"></div>
<div style="position:absolute;left:563px;top:421px;width:713px;height:20px;background:#eef5fe"></div>
<div style="position:absolute;left:364.00px;top:422.53px;font-size:13.52px;line-height:16px;font-weight:normal;color:#000;letter-spacing:0.254px;white-space:pre;">Chain Feeds:</div>
<div style="position:absolute;left:588.00px;top:422.53px;font-size:13.52px;line-height:16px;font-weight:normal;color:#000;letter-spacing:0.362px;white-space:pre;">System Feed</div>
<div style="position:absolute;left:362px;top:441px;width:201px;height:20px;background:#f4f4f4"></div>
<div style="position:absolute;left:563px;top:441px;width:713px;height:20px;background:#ffffff"></div>
<div style="position:absolute;left:364.00px;top:442.53px;font-size:13.52px;line-height:16px;font-weight:normal;color:#000;letter-spacing:0.505px;white-space:pre;">Chain forwards:</div>
<div style="position:absolute;left:588.00px;top:442.53px;font-size:13.52px;line-height:16px;font-weight:normal;color:#000;letter-spacing:0.383px;white-space:pre;">0 Forwards</div>
<div style="position:absolute;left:362px;top:461px;width:201px;height:20px;background:#e4eaf4"></div>
<div style="position:absolute;left:563px;top:461px;width:713px;height:20px;background:#eef5fe"></div>
<div style="position:absolute;left:381.00px;top:462.53px;font-size:13.52px;line-height:16px;font-weight:normal;color:#000;letter-spacing:0.285px;white-space:pre;">Rule(s):</div>
<div style="position:absolute;left:588.00px;top:462.53px;font-size:13.52px;line-height:16px;font-weight:normal;color:#000;letter-spacing:0.297px;white-space:pre;">13 Rules</div>
<div style="position:absolute;left:382px;top:481px;width:181px;height:20px;background:#f4f4f4"></div>
<div style="position:absolute;left:563px;top:481px;width:713px;height:20px;background:#ffffff"></div>
<div style="position:absolute;left:401.00px;top:482.53px;font-size:13.52px;line-height:16px;font-weight:normal;color:#000;letter-spacing:0.321px;white-space:pre;">Rule: 1</div>
<div style="position:absolute;left:588.00px;top:482.53px;font-size:13.52px;line-height:16px;font-weight:normal;color:#000;letter-spacing:0.859px;white-space:pre;">www</div>
<div style="position:absolute;left:382px;top:501px;width:181px;height:20px;background:#e4eaf4"></div>
<div style="position:absolute;left:563px;top:501px;width:713px;height:20px;background:#eef5fe"></div>
<div style="position:absolute;left:401.00px;top:502.53px;font-size:13.52px;line-height:16px;font-weight:normal;color:#000;letter-spacing:0.321px;white-space:pre;">Rule: 2</div>
<div style="position:absolute;left:588.00px;top:502.53px;font-size:13.52px;line-height:16px;font-weight:normal;color:#000;letter-spacing:0.750px;white-space:pre;">2</div>
<div style="position:absolute;left:382px;top:521px;width:181px;height:20px;background:#f4f4f4"></div>
<div style="position:absolute;left:563px;top:521px;width:713px;height:20px;background:#ffffff"></div>
<div style="position:absolute;left:401.00px;top:522.53px;font-size:13.52px;line-height:16px;font-weight:normal;color:#000;letter-spacing:0.321px;white-space:pre;">Rule: 3</div>
<div style="position:absolute;left:588.00px;top:522.53px;font-size:13.52px;line-height:16px;font-weight:normal;color:#000;letter-spacing:0.891px;white-space:pre;">ftp</div>
<div style="position:absolute;left:382px;top:541px;width:181px;height:20px;background:#e4eaf4"></div>
<div style="position:absolute;left:563px;top:541px;width:713px;height:20px;background:#eef5fe"></div>
<div style="position:absolute;left:401.00px;top:542.53px;font-size:13.52px;line-height:16px;font-weight:normal;color:#000;letter-spacing:0.321px;white-space:pre;">Rule: 4</div>
<div style="position:absolute;left:588.00px;top:542.53px;font-size:13.52px;line-height:16px;font-weight:normal;color:#000;letter-spacing:0.674px;white-space:pre;">ftp-data-dest-port</div>
<div style="position:absolute;left:382px;top:561px;width:181px;height:20px;background:#f4f4f4"></div>
<div style="position:absolute;left:563px;top:561px;width:713px;height:20px;background:#ffffff"></div>
<div style="position:absolute;left:401.00px;top:562.53px;font-size:13.52px;line-height:16px;font-weight:normal;color:#000;letter-spacing:0.321px;white-space:pre;">Rule: 5</div>
<div style="position:absolute;left:588.00px;top:562.53px;font-size:13.52px;line-height:16px;font-weight:normal;color:#000;letter-spacing:0.608px;white-space:pre;">ftp-data-source-port</div>
<div style="position:absolute;left:382px;top:581px;width:181px;height:20px;background:#e4eaf4"></div>
<div style="position:absolute;left:563px;top:581px;width:713px;height:20px;background:#eef5fe"></div>
<div style="position:absolute;left:401.00px;top:582.53px;font-size:13.52px;line-height:16px;font-weight:normal;color:#000;letter-spacing:0.321px;white-space:pre;">Rule: 6</div>
<div style="position:absolute;left:588.00px;top:582.53px;font-size:13.52px;line-height:16px;font-weight:normal;color:#000;letter-spacing:0.573px;white-space:pre;">icq</div>
<div style="position:absolute;left:382px;top:601px;width:181px;height:20px;background:#f4f4f4"></div>
<div style="position:absolute;left:563px;top:601px;width:713px;height:20px;background:#ffffff"></div>
<div style="position:absolute;left:401.00px;top:602.53px;font-size:13.52px;line-height:16px;font-weight:normal;color:#000;letter-spacing:0.321px;white-space:pre;">Rule: 7</div>
<div style="position:absolute;left:588.00px;top:602.53px;font-size:13.52px;line-height:16px;font-weight:normal;color:#000;letter-spacing:0.516px;white-space:pre;">irc</div>
<div style="position:absolute;left:382px;top:621px;width:181px;height:20px;background:#e4eaf4"></div>
<div style="position:absolute;left:563px;top:621px;width:713px;height:20px;background:#eef5fe"></div>
<div style="position:absolute;left:401.00px;top:622.53px;font-size:13.52px;line-height:16px;font-weight:normal;color:#000;letter-spacing:0.321px;white-space:pre;">Rule: 8</div>
<div style="position:absolute;left:588.00px;top:622.53px;font-size:13.52px;line-height:16px;font-weight:normal;color:#000;letter-spacing:0.688px;white-space:pre;">torrents</div>
<div style="position:absolute;left:382px;top:641px;width:181px;height:20px;background:#f4f4f4"></div>
<div style="position:absolute;left:563px;top:641px;width:713px;height:20px;background:#ffffff"></div>
<div style="position:absolute;left:401.00px;top:642.53px;font-size:13.52px;line-height:16px;font-weight:normal;color:#000;letter-spacing:0.321px;white-space:pre;">Rule: 9</div>
<div style="position:absolute;left:588.00px;top:642.53px;font-size:13.52px;line-height:16px;font-weight:normal;color:#000;letter-spacing:0.584px;white-space:pre;">apexdc-udp</div>
<div style="position:absolute;left:382px;top:661px;width:181px;height:20px;background:#e4eaf4"></div>
<div style="position:absolute;left:563px;top:661px;width:713px;height:20px;background:#eef5fe"></div>
<div style="position:absolute;left:401.00px;top:662.53px;font-size:13.52px;line-height:16px;font-weight:normal;color:#000;letter-spacing:0.375px;white-space:pre;">Rule: 10</div>
<div style="position:absolute;left:588.00px;top:662.53px;font-size:13.52px;line-height:16px;font-weight:normal;color:#000;letter-spacing:0.611px;white-space:pre;">apexdc-tcp</div>
<div style="position:absolute;left:382px;top:681px;width:181px;height:20px;background:#f4f4f4"></div>
<div style="position:absolute;left:563px;top:681px;width:713px;height:20px;background:#ffffff"></div>
<div style="position:absolute;left:401.00px;top:682.53px;font-size:13.52px;line-height:16px;font-weight:normal;color:#000;letter-spacing:0.500px;white-space:pre;">Rule: 11</div>
<div style="position:absolute;left:588.00px;top:682.53px;font-size:13.52px;line-height:16px;font-weight:normal;color:#000;letter-spacing:0.565px;white-space:pre;">radio-san-ru-8001</div>
<div style="position:absolute;left:382px;top:701px;width:181px;height:20px;background:#e4eaf4"></div>
<div style="position:absolute;left:563px;top:701px;width:713px;height:20px;background:#eef5fe"></div>
<div style="position:absolute;left:401.00px;top:702.53px;font-size:13.52px;line-height:16px;font-weight:normal;color:#000;letter-spacing:0.375px;white-space:pre;">Rule: 12</div>
<div style="position:absolute;left:588.00px;top:702.53px;font-size:13.52px;line-height:16px;font-weight:normal;color:#000;letter-spacing:0.357px;white-space:pre;">CS16tcp</div>
<div style="position:absolute;left:382px;top:721px;width:181px;height:20px;background:#7aa5e0"></div>
<div style="position:absolute;left:563px;top:721px;width:713px;height:20px;background:#ffffff"></div>
<div style="position:absolute;left:382px;top:721px;width:181px;height:20px;background:repeating-linear-gradient(90deg,#7a5a20 0 1px,transparent 1px 2px) top/100% 1px no-repeat,repeating-linear-gradient(90deg,#7a5a20 0 1px,transparent 1px 2px) bottom/100% 1px no-repeat,repeating-linear-gradient(#7a5a20 0 1px,transparent 1px 2px) left/1px 100% no-repeat,repeating-linear-gradient(#7a5a20 0 1px,transparent 1px 2px) right/1px 100% no-repeat"></div>
<div style="position:absolute;left:401.00px;top:722.53px;font-size:13.52px;line-height:16px;font-weight:normal;color:#fff;letter-spacing:0.375px;white-space:pre;">Rule: 13</div>
<div style="position:absolute;left:588.00px;top:722.53px;font-size:13.52px;line-height:16px;font-weight:normal;color:#000;letter-spacing:0.319px;white-space:pre;">CS16udp</div>
<div style="position:absolute;left:362px;top:741px;width:201px;height:20px;background:#e4eaf4"></div>
<div style="position:absolute;left:563px;top:741px;width:713px;height:20px;background:#eef5fe"></div>
<div style="position:absolute;left:381.00px;top:742.53px;font-size:13.52px;line-height:16px;font-weight:normal;color:#000;letter-spacing:0.469px;white-space:pre;">Target:</div>
<div style="position:absolute;left:588.00px;top:742.53px;font-size:13.52px;line-height:16px;font-weight:normal;color:#000;letter-spacing:-0.484px;white-space:pre;">DROP</div>
<div style="position:absolute;left:382px;top:761px;width:181px;height:20px;background:#f4f4f4"></div>
<div style="position:absolute;left:563px;top:761px;width:713px;height:20px;background:#ffffff"></div>
<div style="position:absolute;left:402.00px;top:762.53px;font-size:13.52px;line-height:16px;font-weight:normal;color:#000;letter-spacing:0.341px;white-space:pre;">Policy Cmd:</div>
<div style="position:absolute;left:588.00px;top:762.53px;font-size:13.52px;line-height:16px;font-weight:normal;color:#000;letter-spacing:0.094px;white-space:pre;">$IPT -t filter -P OUTPUT DROP</div>
<div style="position:absolute;left:342px;top:781px;width:221px;height:20px;background:#e4eaf4"></div>
<div style="position:absolute;left:563px;top:781px;width:713px;height:20px;background:#eef5fe"></div>
<div style="position:absolute;left:361.00px;top:782.53px;font-size:13.52px;line-height:16px;font-weight:normal;color:#000;letter-spacing:0.406px;white-space:pre;">Chain:</div>
<div style="position:absolute;left:588.00px;top:782.53px;font-size:13.52px;line-height:16px;font-weight:normal;color:#000;letter-spacing:-0.395px;white-space:pre;">FORWARD</div>
<div style="position:absolute;left:334px;top:141px;width:8px;height:1px;background:repeating-linear-gradient(90deg,#a8a8a8 0 1px,transparent 1px 2px)"></div>
<div style="position:absolute;left:334px;top:197px;width:8px;height:1px;background:repeating-linear-gradient(90deg,#a8a8a8 0 1px,transparent 1px 2px)"></div>
<div style="position:absolute;left:354px;top:217px;width:8px;height:1px;background:repeating-linear-gradient(90deg,#a8a8a8 0 1px,transparent 1px 2px)"></div>
<div style="position:absolute;left:354px;top:255px;width:8px;height:1px;background:repeating-linear-gradient(90deg,#a8a8a8 0 1px,transparent 1px 2px)"></div>
<div style="position:absolute;left:354px;top:275px;width:8px;height:1px;background:repeating-linear-gradient(90deg,#a8a8a8 0 1px,transparent 1px 2px)"></div>
<div style="position:absolute;left:354px;top:295px;width:8px;height:1px;background:repeating-linear-gradient(90deg,#a8a8a8 0 1px,transparent 1px 2px)"></div>
<div style="position:absolute;left:354px;top:315px;width:8px;height:1px;background:repeating-linear-gradient(90deg,#a8a8a8 0 1px,transparent 1px 2px)"></div>
<div style="position:absolute;left:374px;top:335px;width:8px;height:1px;background:repeating-linear-gradient(90deg,#a8a8a8 0 1px,transparent 1px 2px)"></div>
<div style="position:absolute;left:334px;top:355px;width:8px;height:1px;background:repeating-linear-gradient(90deg,#a8a8a8 0 1px,transparent 1px 2px)"></div>
<div style="position:absolute;left:354px;top:375px;width:8px;height:1px;background:repeating-linear-gradient(90deg,#a8a8a8 0 1px,transparent 1px 2px)"></div>
<div style="position:absolute;left:354px;top:431px;width:8px;height:1px;background:repeating-linear-gradient(90deg,#a8a8a8 0 1px,transparent 1px 2px)"></div>
<div style="position:absolute;left:354px;top:451px;width:8px;height:1px;background:repeating-linear-gradient(90deg,#a8a8a8 0 1px,transparent 1px 2px)"></div>
<div style="position:absolute;left:354px;top:471px;width:8px;height:1px;background:repeating-linear-gradient(90deg,#a8a8a8 0 1px,transparent 1px 2px)"></div>
<div style="position:absolute;left:374px;top:491px;width:8px;height:1px;background:repeating-linear-gradient(90deg,#a8a8a8 0 1px,transparent 1px 2px)"></div>
<div style="position:absolute;left:374px;top:511px;width:8px;height:1px;background:repeating-linear-gradient(90deg,#a8a8a8 0 1px,transparent 1px 2px)"></div>
<div style="position:absolute;left:374px;top:531px;width:8px;height:1px;background:repeating-linear-gradient(90deg,#a8a8a8 0 1px,transparent 1px 2px)"></div>
<div style="position:absolute;left:374px;top:551px;width:8px;height:1px;background:repeating-linear-gradient(90deg,#a8a8a8 0 1px,transparent 1px 2px)"></div>
<div style="position:absolute;left:374px;top:571px;width:8px;height:1px;background:repeating-linear-gradient(90deg,#a8a8a8 0 1px,transparent 1px 2px)"></div>
<div style="position:absolute;left:374px;top:591px;width:8px;height:1px;background:repeating-linear-gradient(90deg,#a8a8a8 0 1px,transparent 1px 2px)"></div>
<div style="position:absolute;left:374px;top:611px;width:8px;height:1px;background:repeating-linear-gradient(90deg,#a8a8a8 0 1px,transparent 1px 2px)"></div>
<div style="position:absolute;left:374px;top:631px;width:8px;height:1px;background:repeating-linear-gradient(90deg,#a8a8a8 0 1px,transparent 1px 2px)"></div>
<div style="position:absolute;left:374px;top:651px;width:8px;height:1px;background:repeating-linear-gradient(90deg,#a8a8a8 0 1px,transparent 1px 2px)"></div>
<div style="position:absolute;left:374px;top:671px;width:8px;height:1px;background:repeating-linear-gradient(90deg,#a8a8a8 0 1px,transparent 1px 2px)"></div>
<div style="position:absolute;left:374px;top:691px;width:8px;height:1px;background:repeating-linear-gradient(90deg,#a8a8a8 0 1px,transparent 1px 2px)"></div>
<div style="position:absolute;left:374px;top:711px;width:8px;height:1px;background:repeating-linear-gradient(90deg,#a8a8a8 0 1px,transparent 1px 2px)"></div>
<div style="position:absolute;left:374px;top:731px;width:8px;height:1px;background:repeating-linear-gradient(90deg,#a8a8a8 0 1px,transparent 1px 2px)"></div>
<div style="position:absolute;left:354px;top:751px;width:8px;height:1px;background:repeating-linear-gradient(90deg,#a8a8a8 0 1px,transparent 1px 2px)"></div>
<div style="position:absolute;left:374px;top:771px;width:8px;height:1px;background:repeating-linear-gradient(90deg,#a8a8a8 0 1px,transparent 1px 2px)"></div>
<div style="position:absolute;left:334px;top:791px;width:8px;height:1px;background:repeating-linear-gradient(90deg,#a8a8a8 0 1px,transparent 1px 2px)"></div>
<div style="position:absolute;left:332px;top:132px;width:1px;height:659px;background:repeating-linear-gradient(#a8a8a8 0 1px,transparent 1px 2px)"></div>
<div style="position:absolute;left:352px;top:208px;width:1px;height:107px;background:repeating-linear-gradient(#a8a8a8 0 1px,transparent 1px 2px)"></div>
<div style="position:absolute;left:372px;top:326px;width:1px;height:9px;background:repeating-linear-gradient(#a8a8a8 0 1px,transparent 1px 2px)"></div>
<div style="position:absolute;left:352px;top:366px;width:1px;height:385px;background:repeating-linear-gradient(#a8a8a8 0 1px,transparent 1px 2px)"></div>
<div style="position:absolute;left:372px;top:482px;width:1px;height:249px;background:repeating-linear-gradient(#a8a8a8 0 1px,transparent 1px 2px)"></div>
<div style="position:absolute;left:372px;top:762px;width:1px;height:9px;background:repeating-linear-gradient(#a8a8a8 0 1px,transparent 1px 2px)"></div>
<svg style="position:absolute;left:323px;top:113px;overflow:visible" width="15" height="15" viewBox="0 0 15 15"><defs><linearGradient id="g22" x1="0" y1="0" x2="1" y2="1"><stop offset="0" stop-color="#fffaf0"/><stop offset="1" stop-color="#ffe8c8"/></linearGradient></defs><path d="M2.6 0.8 L14.2 3.6 L11.8 14.6 L0.6 11.8 Z" fill="url(#g22)" stroke="#f0b060" stroke-width="1.2"/><path d="M6.5 1.8 L4.3 12.8 M10.4 2.7 L8 13.7 M1.9 4.5 L13.4 7.2 M1.2 8.2 L12.6 11" stroke="#f4c080" stroke-width="1"/><path d="M3.2 1.5 L6 3.5 L3.6 5.2Z" fill="#8090a8"/></svg>
<svg style="position:absolute;left:328px;top:193px;overflow:visible" width="9" height="9" viewBox="0 0 9 9"><rect x="0.5" y="0.5" width="8" height="8" rx="2.2" fill="#fff" stroke="#6a6a6a" stroke-width="1"/><rect x="2" y="4" width="5" height="1.2" fill="#000"/></svg>
<svg style="position:absolute;left:343px;top:190px;overflow:visible" width="16" height="15" viewBox="0 0 16 15"><defs><linearGradient id="g23" x1="0" y1="0" x2="1" y2="1"><stop offset="0" stop-color="#ffffff"/><stop offset="0.35" stop-color="#d8d8ec"/><stop offset="0.7" stop-color="#8888b0"/><stop offset="1" stop-color="#e8e8f8"/></linearGradient></defs><path d="M1 4 L6 0.2 L15.6 8.2 L10 13.2 Z" fill="url(#g23)" stroke="#7a7a98" stroke-width="0.6"/><path d="M15.6 8.2 L10 13.2 L10.4 13.8 L15.8 9.4Z" fill="#c07818"/><g fill="#f4c020" stroke="#d08810" stroke-width="0.5"><rect x="0.4" y="4.8" width="2.8" height="5.6" rx="1.2" transform="rotate(-35 1.8 7.6)"/><rect x="2.8" y="6.8" width="2.8" height="5.6" rx="1.2" transform="rotate(-35 4.2 9.6)"/><rect x="5.2" y="8.8" width="2.8" height="5.6" rx="1.2" transform="rotate(-35 6.6 11.6)"/><rect x="14" y="7.5" width="2" height="4" rx="0.9" fill="#e89010"/></g></svg>
<svg style="position:absolute;left:363px;top:287px;overflow:visible" width="16" height="15" viewBox="0 0 16 15"><defs><linearGradient id="g24" x1="0.1" y1="0.3" x2="0.9" y2="0.9"><stop offset="0" stop-color="#fffdf0"/><stop offset="0.45" stop-color="#ffe8a0"/><stop offset="1" stop-color="#ffb000"/></linearGradient></defs><path d="M7.8 0.6 L15.3 13.4 Q15.5 14.2 14.6 14.2 H1 Q0.1 14.2 0.4 13.4 Z" fill="url(#g24)" stroke="#f0b050" stroke-width="0.9"/><path d="M6.7 4.4 Q7.8 3.6 9 4.4 L8.2 10 H7.5 Z" fill="#e81010"/><circle cx="7.85" cy="11.9" r="1.2" fill="#d01818"/></svg>
<svg style="position:absolute;left:348px;top:311px;overflow:visible" width="9" height="9" viewBox="0 0 9 9"><rect x="0.5" y="0.5" width="8" height="8" rx="2.2" fill="#fff" stroke="#6a6a6a" stroke-width="1"/><rect x="2" y="4" width="5" height="1.2" fill="#000"/></svg>
<svg style="position:absolute;left:363px;top:307px;overflow:visible" width="16" height="16" viewBox="0 0 16 16"><circle cx="7.8" cy="7.8" r="5.4" fill="none" stroke="#000" stroke-width="1.7"/><circle cx="7.8" cy="7.8" r="2.4" fill="none" stroke="#000" stroke-width="1.4"/><path d="M7.8 0.5V15.5M0.5 7.8H15.5" stroke="#000" stroke-width="1.5"/></svg>
<svg style="position:absolute;left:383px;top:329px;overflow:visible" width="16" height="13" viewBox="0 0 16 13"><rect x="1" y="1" width="13.5" height="10.5" rx="1.3" fill="#fff" stroke="#000" stroke-width="1.7"/><path d="M15.4 2.5V12.4H2.5" fill="none" stroke="#000" stroke-opacity="0.25" stroke-width="1"/><rect x="3" y="3" width="2" height="5.5" fill="#000"/></svg>
<svg style="position:absolute;left:328px;top:351px;overflow:visible" width="9" height="9" viewBox="0 0 9 9"><rect x="0.5" y="0.5" width="8" height="8" rx="2.2" fill="#fff" stroke="#6a6a6a" stroke-width="1"/><rect x="2" y="4" width="5" height="1.2" fill="#000"/></svg>
<svg style="position:absolute;left:343px;top:348px;overflow:visible" width="16" height="15" viewBox="0 0 16 15"><defs><linearGradient id="g25" x1="0" y1="0" x2="1" y2="1"><stop offset="0" stop-color="#ffffff"/><stop offset="0.35" stop-color="#d8d8ec"/><stop offset="0.7" stop-color="#8888b0"/><stop offset="1" stop-color="#e8e8f8"/></linearGradient></defs><path d="M1 4 L6 0.2 L15.6 8.2 L10 13.2 Z" fill="url(#g25)" stroke="#7a7a98" stroke-width="0.6"/><path d="M15.6 8.2 L10 13.2 L10.4 13.8 L15.8 9.4Z" fill="#c07818"/><g fill="#f4c020" stroke="#d08810" stroke-width="0.5"><rect x="0.4" y="4.8" width="2.8" height="5.6" rx="1.2" transform="rotate(-35 1.8 7.6)"/><rect x="2.8" y="6.8" width="2.8" height="5.6" rx="1.2" transform="rotate(-35 4.2 9.6)"/><rect x="5.2" y="8.8" width="2.8" height="5.6" rx="1.2" transform="rotate(-35 6.6 11.6)"/><rect x="14" y="7.5" width="2" height="4" rx="0.9" fill="#e89010"/></g></svg>
<svg style="position:absolute;left:348px;top:467px;overflow:visible" width="9" height="9" viewBox="0 0 9 9"><rect x="0.5" y="0.5" width="8" height="8" rx="2.2" fill="#fff" stroke="#6a6a6a" stroke-width="1"/><rect x="2" y="4" width="5" height="1.2" fill="#000"/></svg>
<svg style="position:absolute;left:363px;top:463px;overflow:visible" width="16" height="15" viewBox="0 0 16 15"><defs><linearGradient id="g26" x1="0.1" y1="0.3" x2="0.9" y2="0.9"><stop offset="0" stop-color="#fffdf0"/><stop offset="0.45" stop-color="#ffe8a0"/><stop offset="1" stop-color="#ffb000"/></linearGradient></defs><path d="M7.8 0.6 L15.3 13.4 Q15.5 14.2 14.6 14.2 H1 Q0.1 14.2 0.4 13.4 Z" fill="url(#g26)" stroke="#f0b050" stroke-width="0.9"/><path d="M6.7 4.4 Q7.8 3.6 9 4.4 L8.2 10 H7.5 Z" fill="#e81010"/><circle cx="7.85" cy="11.9" r="1.2" fill="#d01818"/></svg>
<svg style="position:absolute;left:368px;top:487px;overflow:visible" width="9" height="9" viewBox="0 0 9 9"><rect x="0.5" y="0.5" width="8" height="8" rx="2.2" fill="#fff" stroke="#6a6a6a" stroke-width="1"/><rect x="2" y="4" width="5" height="1.2" fill="#000"/><rect x="3.9" y="2" width="1.2" height="5" fill="#000"/></svg>
<svg style="position:absolute;left:383px;top:483px;overflow:visible" width="16" height="15" viewBox="0 0 16 15"><defs><linearGradient id="g27" x1="0.1" y1="0.3" x2="0.9" y2="0.9"><stop offset="0" stop-color="#fffdf0"/><stop offset="0.45" stop-color="#ffe8a0"/><stop offset="1" stop-color="#ffb000"/></linearGradient></defs><path d="M7.8 0.6 L15.3 13.4 Q15.5 14.2 14.6 14.2 H1 Q0.1 14.2 0.4 13.4 Z" fill="url(#g27)" stroke="#f0b050" stroke-width="0.9"/><path d="M6.7 4.4 Q7.8 3.6 9 4.4 L8.2 10 H7.5 Z" fill="#e81010"/><circle cx="7.85" cy="11.9" r="1.2" fill="#d01818"/></svg>
<svg style="position:absolute;left:368px;top:507px;overflow:visible" width="9" height="9" viewBox="0 0 9 9"><rect x="0.5" y="0.5" width="8" height="8" rx="2.2" fill="#fff" stroke="#6a6a6a" stroke-width="1"/><rect x="2" y="4" width="5" height="1.2" fill="#000"/><rect x="3.9" y="2" width="1.2" height="5" fill="#000"/></svg>
<svg style="position:absolute;left:383px;top:503px;overflow:visible" width="16" height="15" viewBox="0 0 16 15"><defs><linearGradient id="g28" x1="0.1" y1="0.3" x2="0.9" y2="0.9"><stop offset="0" stop-color="#fffdf0"/><stop offset="0.45" stop-color="#ffe8a0"/><stop offset="1" stop-color="#ffb000"/></linearGradient></defs><path d="M7.8 0.6 L15.3 13.4 Q15.5 14.2 14.6 14.2 H1 Q0.1 14.2 0.4 13.4 Z" fill="url(#g28)" stroke="#f0b050" stroke-width="0.9"/><path d="M6.7 4.4 Q7.8 3.6 9 4.4 L8.2 10 H7.5 Z" fill="#e81010"/><circle cx="7.85" cy="11.9" r="1.2" fill="#d01818"/></svg>
<svg style="position:absolute;left:368px;top:527px;overflow:visible" width="9" height="9" viewBox="0 0 9 9"><rect x="0.5" y="0.5" width="8" height="8" rx="2.2" fill="#fff" stroke="#6a6a6a" stroke-width="1"/><rect x="2" y="4" width="5" height="1.2" fill="#000"/><rect x="3.9" y="2" width="1.2" height="5" fill="#000"/></svg>
<svg style="position:absolute;left:383px;top:523px;overflow:visible" width="16" height="15" viewBox="0 0 16 15"><defs><linearGradient id="g29" x1="0.1" y1="0.3" x2="0.9" y2="0.9"><stop offset="0" stop-color="#fffdf0"/><stop offset="0.45" stop-color="#ffe8a0"/><stop offset="1" stop-color="#ffb000"/></linearGradient></defs><path d="M7.8 0.6 L15.3 13.4 Q15.5 14.2 14.6 14.2 H1 Q0.1 14.2 0.4 13.4 Z" fill="url(#g29)" stroke="#f0b050" stroke-width="0.9"/><path d="M6.7 4.4 Q7.8 3.6 9 4.4 L8.2 10 H7.5 Z" fill="#e81010"/><circle cx="7.85" cy="11.9" r="1.2" fill="#d01818"/></svg>
<svg style="position:absolute;left:368px;top:547px;overflow:visible" width="9" height="9" viewBox="0 0 9 9"><rect x="0.5" y="0.5" width="8" height="8" rx="2.2" fill="#fff" stroke="#6a6a6a" stroke-width="1"/><rect x="2" y="4" width="5" height="1.2" fill="#000"/><rect x="3.9" y="2" width="1.2" height="5" fill="#000"/></svg>
<svg style="position:absolute;left:383px;top:543px;overflow:visible" width="16" height="15" viewBox="0 0 16 15"><defs><linearGradient id="g30" x1="0.1" y1="0.3" x2="0.9" y2="0.9"><stop offset="0" stop-color="#fffdf0"/><stop offset="0.45" stop-color="#ffe8a0"/><stop offset="1" stop-color="#ffb000"/></linearGradient></defs><path d="M7.8 0.6 L15.3 13.4 Q15.5 14.2 14.6 14.2 H1 Q0.1 14.2 0.4 13.4 Z" fill="url(#g30)" stroke="#f0b050" stroke-width="0.9"/><path d="M6.7 4.4 Q7.8 3.6 9 4.4 L8.2 10 H7.5 Z" fill="#e81010"/><circle cx="7.85" cy="11.9" r="1.2" fill="#d01818"/></svg>
<svg style="position:absolute;left:368px;top:567px;overflow:visible" width="9" height="9" viewBox="0 0 9 9"><rect x="0.5" y="0.5" width="8" height="8" rx="2.2" fill="#fff" stroke="#6a6a6a" stroke-width="1"/><rect x="2" y="4" width="5" height="1.2" fill="#000"/><rect x="3.9" y="2" width="1.2" height="5" fill="#000"/></svg>
<svg style="position:absolute;left:383px;top:563px;overflow:visible" width="16" height="15" viewBox="0 0 16 15"><defs><linearGradient id="g31" x1="0.1" y1="0.3" x2="0.9" y2="0.9"><stop offset="0" stop-color="#fffdf0"/><stop offset="0.45" stop-color="#ffe8a0"/><stop offset="1" stop-color="#ffb000"/></linearGradient></defs><path d="M7.8 0.6 L15.3 13.4 Q15.5 14.2 14.6 14.2 H1 Q0.1 14.2 0.4 13.4 Z" fill="url(#g31)" stroke="#f0b050" stroke-width="0.9"/><path d="M6.7 4.4 Q7.8 3.6 9 4.4 L8.2 10 H7.5 Z" fill="#e81010"/><circle cx="7.85" cy="11.9" r="1.2" fill="#d01818"/></svg>
<svg style="position:absolute;left:368px;top:587px;overflow:visible" width="9" height="9" viewBox="0 0 9 9"><rect x="0.5" y="0.5" width="8" height="8" rx="2.2" fill="#fff" stroke="#6a6a6a" stroke-width="1"/><rect x="2" y="4" width="5" height="1.2" fill="#000"/><rect x="3.9" y="2" width="1.2" height="5" fill="#000"/></svg>
<svg style="position:absolute;left:383px;top:583px;overflow:visible" width="16" height="15" viewBox="0 0 16 15"><defs><linearGradient id="g32" x1="0.1" y1="0.3" x2="0.9" y2="0.9"><stop offset="0" stop-color="#fffdf0"/><stop offset="0.45" stop-color="#ffe8a0"/><stop offset="1" stop-color="#ffb000"/></linearGradient></defs><path d="M7.8 0.6 L15.3 13.4 Q15.5 14.2 14.6 14.2 H1 Q0.1 14.2 0.4 13.4 Z" fill="url(#g32)" stroke="#f0b050" stroke-width="0.9"/><path d="M6.7 4.4 Q7.8 3.6 9 4.4 L8.2 10 H7.5 Z" fill="#e81010"/><circle cx="7.85" cy="11.9" r="1.2" fill="#d01818"/></svg>
<svg style="position:absolute;left:368px;top:607px;overflow:visible" width="9" height="9" viewBox="0 0 9 9"><rect x="0.5" y="0.5" width="8" height="8" rx="2.2" fill="#fff" stroke="#6a6a6a" stroke-width="1"/><rect x="2" y="4" width="5" height="1.2" fill="#000"/><rect x="3.9" y="2" width="1.2" height="5" fill="#000"/></svg>
<svg style="position:absolute;left:383px;top:603px;overflow:visible" width="16" height="15" viewBox="0 0 16 15"><defs><linearGradient id="g33" x1="0.1" y1="0.3" x2="0.9" y2="0.9"><stop offset="0" stop-color="#fffdf0"/><stop offset="0.45" stop-color="#ffe8a0"/><stop offset="1" stop-color="#ffb000"/></linearGradient></defs><path d="M7.8 0.6 L15.3 13.4 Q15.5 14.2 14.6 14.2 H1 Q0.1 14.2 0.4 13.4 Z" fill="url(#g33)" stroke="#f0b050" stroke-width="0.9"/><path d="M6.7 4.4 Q7.8 3.6 9 4.4 L8.2 10 H7.5 Z" fill="#e81010"/><circle cx="7.85" cy="11.9" r="1.2" fill="#d01818"/></svg>
<svg style="position:absolute;left:368px;top:627px;overflow:visible" width="9" height="9" viewBox="0 0 9 9"><rect x="0.5" y="0.5" width="8" height="8" rx="2.2" fill="#fff" stroke="#6a6a6a" stroke-width="1"/><rect x="2" y="4" width="5" height="1.2" fill="#000"/><rect x="3.9" y="2" width="1.2" height="5" fill="#000"/></svg>
<svg style="position:absolute;left:383px;top:623px;overflow:visible" width="16" height="15" viewBox="0 0 16 15"><defs><linearGradient id="g34" x1="0.1" y1="0.3" x2="0.9" y2="0.9"><stop offset="0" stop-color="#fffdf0"/><stop offset="0.45" stop-color="#ffe8a0"/><stop offset="1" stop-color="#ffb000"/></linearGradient></defs><path d="M7.8 0.6 L15.3 13.4 Q15.5 14.2 14.6 14.2 H1 Q0.1 14.2 0.4 13.4 Z" fill="url(#g34)" stroke="#f0b050" stroke-width="0.9"/><path d="M6.7 4.4 Q7.8 3.6 9 4.4 L8.2 10 H7.5 Z" fill="#e81010"/><circle cx="7.85" cy="11.9" r="1.2" fill="#d01818"/></svg>
<svg style="position:absolute;left:368px;top:647px;overflow:visible" width="9" height="9" viewBox="0 0 9 9"><rect x="0.5" y="0.5" width="8" height="8" rx="2.2" fill="#fff" stroke="#6a6a6a" stroke-width="1"/><rect x="2" y="4" width="5" height="1.2" fill="#000"/><rect x="3.9" y="2" width="1.2" height="5" fill="#000"/></svg>
<svg style="position:absolute;left:383px;top:643px;overflow:visible" width="16" height="15" viewBox="0 0 16 15"><defs><linearGradient id="g35" x1="0.1" y1="0.3" x2="0.9" y2="0.9"><stop offset="0" stop-color="#fffdf0"/><stop offset="0.45" stop-color="#ffe8a0"/><stop offset="1" stop-color="#ffb000"/></linearGradient></defs><path d="M7.8 0.6 L15.3 13.4 Q15.5 14.2 14.6 14.2 H1 Q0.1 14.2 0.4 13.4 Z" fill="url(#g35)" stroke="#f0b050" stroke-width="0.9"/><path d="M6.7 4.4 Q7.8 3.6 9 4.4 L8.2 10 H7.5 Z" fill="#e81010"/><circle cx="7.85" cy="11.9" r="1.2" fill="#d01818"/></svg>
<svg style="position:absolute;left:368px;top:667px;overflow:visible" width="9" height="9" viewBox="0 0 9 9"><rect x="0.5" y="0.5" width="8" height="8" rx="2.2" fill="#fff" stroke="#6a6a6a" stroke-width="1"/><rect x="2" y="4" width="5" height="1.2" fill="#000"/><rect x="3.9" y="2" width="1.2" height="5" fill="#000"/></svg>
<svg style="position:absolute;left:383px;top:663px;overflow:visible" width="16" height="15" viewBox="0 0 16 15"><defs><linearGradient id="g36" x1="0.1" y1="0.3" x2="0.9" y2="0.9"><stop offset="0" stop-color="#fffdf0"/><stop offset="0.45" stop-color="#ffe8a0"/><stop offset="1" stop-color="#ffb000"/></linearGradient></defs><path d="M7.8 0.6 L15.3 13.4 Q15.5 14.2 14.6 14.2 H1 Q0.1 14.2 0.4 13.4 Z" fill="url(#g36)" stroke="#f0b050" stroke-width="0.9"/><path d="M6.7 4.4 Q7.8 3.6 9 4.4 L8.2 10 H7.5 Z" fill="#e81010"/><circle cx="7.85" cy="11.9" r="1.2" fill="#d01818"/></svg>
<svg style="position:absolute;left:368px;top:687px;overflow:visible" width="9" height="9" viewBox="0 0 9 9"><rect x="0.5" y="0.5" width="8" height="8" rx="2.2" fill="#fff" stroke="#6a6a6a" stroke-width="1"/><rect x="2" y="4" width="5" height="1.2" fill="#000"/><rect x="3.9" y="2" width="1.2" height="5" fill="#000"/></svg>
<svg style="position:absolute;left:383px;top:683px;overflow:visible" width="16" height="15" viewBox="0 0 16 15"><defs><linearGradient id="g37" x1="0.1" y1="0.3" x2="0.9" y2="0.9"><stop offset="0" stop-color="#fffdf0"/><stop offset="0.45" stop-color="#ffe8a0"/><stop offset="1" stop-color="#ffb000"/></linearGradient></defs><path d="M7.8 0.6 L15.3 13.4 Q15.5 14.2 14.6 14.2 H1 Q0.1 14.2 0.4 13.4 Z" fill="url(#g37)" stroke="#f0b050" stroke-width="0.9"/><path d="M6.7 4.4 Q7.8 3.6 9 4.4 L8.2 10 H7.5 Z" fill="#e81010"/><circle cx="7.85" cy="11.9" r="1.2" fill="#d01818"/></svg>
<svg style="position:absolute;left:368px;top:707px;overflow:visible" width="9" height="9" viewBox="0 0 9 9"><rect x="0.5" y="0.5" width="8" height="8" rx="2.2" fill="#fff" stroke="#6a6a6a" stroke-width="1"/><rect x="2" y="4" width="5" height="1.2" fill="#000"/><rect x="3.9" y="2" width="1.2" height="5" fill="#000"/></svg>
<svg style="position:absolute;left:383px;top:703px;overflow:visible" width="16" height="15" viewBox="0 0 16 15"><defs><linearGradient id="g38" x1="0.1" y1="0.3" x2="0.9" y2="0.9"><stop offset="0" stop-color="#fffdf0"/><stop offset="0.45" stop-color="#ffe8a0"/><stop offset="1" stop-color="#ffb000"/></linearGradient></defs><path d="M7.8 0.6 L15.3 13.4 Q15.5 14.2 14.6 14.2 H1 Q0.1 14.2 0.4 13.4 Z" fill="url(#g38)" stroke="#f0b050" stroke-width="0.9"/><path d="M6.7 4.4 Q7.8 3.6 9 4.4 L8.2 10 H7.5 Z" fill="#e81010"/><circle cx="7.85" cy="11.9" r="1.2" fill="#d01818"/></svg>
<svg style="position:absolute;left:368px;top:727px;overflow:visible" width="9" height="9" viewBox="0 0 9 9"><rect x="0.5" y="0.5" width="8" height="8" rx="2.2" fill="#fff" stroke="#6a6a6a" stroke-width="1"/><rect x="2" y="4" width="5" height="1.2" fill="#000"/><rect x="3.9" y="2" width="1.2" height="5" fill="#000"/></svg>
<svg style="position:absolute;left:383px;top:723px;overflow:visible" width="16" height="15" viewBox="0 0 16 15"><defs><linearGradient id="g39" x1="0.1" y1="0.3" x2="0.9" y2="0.9"><stop offset="0" stop-color="#fffdf0"/><stop offset="0.45" stop-color="#ffe8a0"/><stop offset="1" stop-color="#ffb000"/></linearGradient></defs><path d="M7.8 0.6 L15.3 13.4 Q15.5 14.2 14.6 14.2 H1 Q0.1 14.2 0.4 13.4 Z" fill="url(#g39)" stroke="#f0b050" stroke-width="0.9"/><path d="M6.7 4.4 Q7.8 3.6 9 4.4 L8.2 10 H7.5 Z" fill="#e81010"/><circle cx="7.85" cy="11.9" r="1.2" fill="#d01818"/></svg>
<svg style="position:absolute;left:348px;top:747px;overflow:visible" width="9" height="9" viewBox="0 0 9 9"><rect x="0.5" y="0.5" width="8" height="8" rx="2.2" fill="#fff" stroke="#6a6a6a" stroke-width="1"/><rect x="2" y="4" width="5" height="1.2" fill="#000"/></svg>
<svg style="position:absolute;left:363px;top:743px;overflow:visible" width="16" height="16" viewBox="0 0 16 16"><circle cx="7.8" cy="7.8" r="5.4" fill="none" stroke="#000" stroke-width="1.7"/><circle cx="7.8" cy="7.8" r="2.4" fill="none" stroke="#000" stroke-width="1.4"/><path d="M7.8 0.5V15.5M0.5 7.8H15.5" stroke="#000" stroke-width="1.5"/></svg>
<svg style="position:absolute;left:383px;top:765px;overflow:visible" width="16" height="13" viewBox="0 0 16 13"><rect x="1" y="1" width="13.5" height="10.5" rx="1.3" fill="#fff" stroke="#000" stroke-width="1.7"/><path d="M15.4 2.5V12.4H2.5" fill="none" stroke="#000" stroke-opacity="0.25" stroke-width="1"/><rect x="3" y="3" width="2" height="5.5" fill="#000"/></svg>
<svg style="position:absolute;left:328px;top:787px;overflow:visible" width="9" height="9" viewBox="0 0 9 9"><rect x="0.5" y="0.5" width="8" height="8" rx="2.2" fill="#fff" stroke="#6a6a6a" stroke-width="1"/><rect x="2" y="4" width="5" height="1.2" fill="#000"/><rect x="3.9" y="2" width="1.2" height="5" fill="#000"/></svg>
<svg style="position:absolute;left:343px;top:784px;overflow:visible" width="16" height="15" viewBox="0 0 16 15"><defs><linearGradient id="g40" x1="0" y1="0" x2="1" y2="1"><stop offset="0" stop-color="#ffffff"/><stop offset="0.35" stop-color="#d8d8ec"/><stop offset="0.7" stop-color="#8888b0"/><stop offset="1" stop-color="#e8e8f8"/></linearGradient></defs><path d="M1 4 L6 0.2 L15.6 8.2 L10 13.2 Z" fill="url(#g40)" stroke="#7a7a98" stroke-width="0.6"/><path d="M15.6 8.2 L10 13.2 L10.4 13.8 L15.8 9.4Z" fill="#c07818"/><g fill="#f4c020" stroke="#d08810" stroke-width="0.5"><rect x="0.4" y="4.8" width="2.8" height="5.6" rx="1.2" transform="rotate(-35 1.8 7.6)"/><rect x="2.8" y="6.8" width="2.8" height="5.6" rx="1.2" transform="rotate(-35 4.2 9.6)"/><rect x="5.2" y="8.8" width="2.8" height="5.6" rx="1.2" transform="rotate(-35 6.6 11.6)"/><rect x="14" y="7.5" width="2" height="4" rx="0.9" fill="#e89010"/></g></svg>
<svg style="position:absolute;left:564px;top:151px;overflow:visible" width="16" height="16" viewBox="0 0 16 16"><path d="M0.6 0.2 H15.2 L14.4 4.2 H13.6 C13.5 2.8 12.8 2.4 11.2 2.4 H10.1 L7.6 12.8 H9.4 L9 15 H1 L1.4 12.8 H3.2 L5.7 2.4 H4.6 C3.2 2.4 2.2 2.8 1.4 4.2 H0.4 Z" fill="#000"/></svg>
<svg style="position:absolute;left:564px;top:218px;overflow:visible" width="16" height="16" viewBox="0 0 16 16"><path d="M0.6 0.2 H15.2 L14.4 4.2 H13.6 C13.5 2.8 12.8 2.4 11.2 2.4 H10.1 L7.6 12.8 H9.4 L9 15 H1 L1.4 12.8 H3.2 L5.7 2.4 H4.6 C3.2 2.4 2.2 2.8 1.4 4.2 H0.4 Z" fill="#000"/></svg>
<svg style="position:absolute;left:564px;top:308px;overflow:visible" width="17" height="13" viewBox="0 0 17 13"><path d="M0.3 0.8 L4.5 4.8 L16.2 0 L3.7 12.2 Z" fill="#10c810" stroke="#0a9a0a" stroke-width="0.5"/></svg>
<svg style="position:absolute;left:564px;top:385px;overflow:visible" width="16" height="16" viewBox="0 0 16 16"><path d="M0.6 0.2 H15.2 L14.4 4.2 H13.6 C13.5 2.8 12.8 2.4 11.2 2.4 H10.1 L7.6 12.8 H9.4 L9 15 H1 L1.4 12.8 H3.2 L5.7 2.4 H4.6 C3.2 2.4 2.2 2.8 1.4 4.2 H0.4 Z" fill="#000"/></svg>
<svg style="position:absolute;left:564px;top:743px;overflow:visible" width="16" height="16" viewBox="0 0 16 16"><defs><radialGradient id="g41" cx="0.5" cy="0.5" r="0.5"><stop offset="0" stop-color="#f46060"/><stop offset="0.75" stop-color="#f04848"/><stop offset="1" stop-color="#d83838"/></radialGradient></defs><circle cx="7.8" cy="7.8" r="7.5" fill="url(#g41)"/><path d="M3 5 Q7.8 1 12.6 5 Q7.8 8 3 5Z" fill="#ffffff" opacity="0.35"/><path d="M3 10.5 Q7.8 14.5 12.6 10.5 Q7.8 8 3 10.5Z" fill="#ffffff" opacity="0.25"/><path d="M4.4 3.8 L11.4 11.6 M11.4 3.8 L4.4 11.6" stroke="#fff" stroke-width="1.8"/></svg>
<div style="position:absolute;left:2px;top:963px;width:637px;height:21px;border:1px solid #a2a6ab;border-radius:2px;box-sizing:border-box"></div>
<div style="position:absolute;left:641px;top:963px;width:636px;height:21px;border:1px solid #a2a6ab;border-radius:2px;box-sizing:border-box"></div>
<div style="position:absolute;left:300.32px;top:965.53px;font-size:13.52px;line-height:16px;font-weight:normal;color:#000;letter-spacing:0.256px;white-space:pre;">Ready</div>
<div style="position:absolute;left:771.84px;top:965.53px;font-size:13.52px;line-height:16px;font-weight:normal;color:#000;letter-spacing:0.536px;white-space:pre;">Firewall is not installed on My Local Computer [127.0.0.1]</div>
<div style="position:absolute;left:0px;top:985px;width:1280px;height:39px;background:#000"></div>
<div style="position:absolute;left:0px;top:986px;width:1280px;height:1px;background:linear-gradient(90deg,#181818 0px,#404040 130px,#a0a0a0 300px,#a0a0a0 1080px,#303030 1200px,#181818 1280px)"></div>
<svg style="position:absolute;left:3px;top:990px;overflow:visible" width="31" height="31" viewBox="0 0 31 31"><defs><linearGradient id="g42" x1="0" y1="0" x2="0" y2="1"><stop offset="0" stop-color="#7aa8f0"/><stop offset="0.5" stop-color="#3a70d8"/><stop offset="1" stop-color="#1848b0"/></linearGradient></defs><rect x="0.8" y="0.8" width="29.4" height="29.4" rx="5" fill="url(#g42)" stroke="#1a50d0" stroke-width="1.5"/><g fill="#f0f4ff"><path d="M13 5 H16.5 V12.5 L22 5 H26.5 L20 13.5 L27 24 H22.5 L16.5 15 V24 H13Z"/><path d="M10 9 A9 9 0 1 0 20 26.5 L18.5 24 A6.5 6.5 0 1 1 11 11.5Z"/><rect x="3.5" y="15" width="3" height="3"/><rect x="6" y="22" width="3" height="3"/><rect x="12" y="25" width="3" height="3"/><rect x="6" y="8" width="3" height="3"/></g></svg>
<svg style="position:absolute;left:42px;top:996px;overflow:visible" width="33" height="23" viewBox="0 0 33 23"><rect x="0.5" y="0.5" width="9" height="21" fill="#e8e8e8" stroke="#a0a0a0" stroke-width="0.8"/><rect x="2" y="3" width="2" height="16" fill="#c0c0c0"/><rect x="11" y="0.5" width="21" height="17" fill="#e0e0e0" stroke="#b0b0b0" stroke-width="0.8"/><rect x="13" y="2.5" width="17" height="13" fill="#50a8f0"/><path d="M17 18 H26 V20 H30 V22 H14 V20 H17Z" fill="#d8d8d8"/><rect x="4.5" y="10.5" width="12" height="11" fill="#000" stroke="#d0d0d0" stroke-width="1"/><path d="M7 14 H9 L11.5 12 V20 L9 18 H7Z M12.5 14 H15 V18 H12.5Z" fill="#fff"/></svg>
<svg style="position:absolute;left:84px;top:996px;overflow:visible" width="29" height="21" viewBox="0 0 29 21"><defs><linearGradient id="g43" x1="0" y1="0" x2="1" y2="1"><stop offset="0" stop-color="#4a90d0"/><stop offset="0.5" stop-color="#2860a8"/><stop offset="1" stop-color="#103070"/></linearGradient></defs><rect x="0" y="0" width="28" height="20" fill="url(#g43)"/><path d="M0 20 L28 4 V20Z" fill="#103a80" opacity="0.6"/><path d="M0 5H28M0 10H28M0 15H28" stroke="#6aa0e0" stroke-width="0.4" opacity="0.6"/><circle cx="2.5" cy="3.5" r="1" fill="#f0e0a0"/><circle cx="2.5" cy="7.5" r="1" fill="#f0e0a0"/></svg>
<svg style="position:absolute;left:126px;top:990px;overflow:visible" width="24" height="31" viewBox="0 0 24 31"><defs><linearGradient id="g44" x1="0" y1="0" x2="1" y2="0"><stop offset="0" stop-color="#909090"/><stop offset="0.3" stop-color="#f0f0f0"/><stop offset="0.6" stop-color="#c0c0c0"/><stop offset="1" stop-color="#808080"/></linearGradient></defs><path d="M0.5 4 Q12 -1 23.5 4 L22 28 Q12 32 2 28Z" fill="url(#g44)"/><ellipse cx="12" cy="4.5" rx="10.5" ry="3.5" fill="#707070" stroke="#d0d0d0" stroke-width="0.8"/><path d="M7 17 Q12 10 17 17 Q12 23 7 17Z" fill="none" stroke="#b0b0b0" stroke-width="1"/></svg>
<div style="position:absolute;left:158px;top:988px;width:250px;height:32px;background:radial-gradient(ellipse 60% 70% at 45% 100%, rgba(140,140,140,0.55), rgba(0,0,0,0) 100%)"></div>
<div style="position:absolute;left:160px;top:1018px;width:245px;height:1px;background:linear-gradient(90deg,rgba(255,255,255,0),rgba(230,230,230,0.9) 30%,rgba(230,230,230,0.9) 70%,rgba(255,255,255,0))"></div>
<svg style="position:absolute;left:162px;top:995px;overflow:visible" width="21" height="21" viewBox="0 0 21 21"><defs><radialGradient id="g45" cx="0.45" cy="0.35" r="0.7"><stop offset="0" stop-color="#ff4040"/><stop offset="1" stop-color="#c00000"/></radialGradient></defs><circle cx="10.5" cy="10.5" r="10.2" fill="url(#g45)"/><ellipse cx="10.5" cy="5" rx="6" ry="3" fill="#fff" opacity="0.3"/><path d="M10 4 C12 7 15 9 14.5 13 C14 16 11.5 16.5 10.5 15 C9.5 16.5 7 16 6.5 13.5 C6 11 8.5 9.5 9 7.5 C9.5 9 11 8 10 4Z" fill="#fff"/></svg>
<div style="position:absolute;left:189px;top:997px;width:215px;height:18px;overflow:hidden;-webkit-mask-image:linear-gradient(90deg,#000 85%,transparent);mask-image:linear-gradient(90deg,#000 85%,transparent)"><div style="position:absolute;left:0;top:0;font-size:13px;line-height:16px;color:#f0f0f0;white-space:pre;text-shadow:1px 1px 1px #000">www-ftpactive-icq.kmfnet Configuring Target</div></div>
<svg style="position:absolute;left:413px;top:994px;overflow:visible" width="21" height="22" viewBox="0 0 21 22"><rect x="0.5" y="0.5" width="20" height="21" rx="2.5" fill="#9090e0" stroke="#5050a0" stroke-width="1"/><path d="M3 4H18M3 8H18M3 12H18M3 16H18" stroke="#c8c8f8" stroke-width="1.2"/><path d="M8 4 L17 13 H12.5 L15 18.5 L13 19.5 L10.5 14 L8 17Z" fill="#000" stroke="#fff" stroke-width="0.8"/></svg>
<div style="position:absolute;left:439.00px;top:997.70px;font-size:13px;line-height:16px;font-weight:normal;color:#f0f0f0;letter-spacing:0.000px;white-space:pre;">Krusader</div>
<svg style="position:absolute;left:662px;top:994px;overflow:visible" width="22" height="22" viewBox="0 0 22 22"><defs><radialGradient id="g46" cx="0.55" cy="0.4" r="0.6"><stop offset="0" stop-color="#a8d8f8"/><stop offset="0.7" stop-color="#2868b8"/><stop offset="1" stop-color="#183870"/></radialGradient></defs><circle cx="11.5" cy="10.5" r="9.5" fill="url(#g46)"/><path d="M1.5 8 C1 16 6 21.5 12 21.5 C18 21.5 21.5 17 21 12 C19 17 14 18.5 10 17 C6 15.5 4 12 5.5 8 C4 9 3 10 2.5 11 C2 10 2 9 1.5 8Z" fill="#f07010"/><path d="M3 5 C5 3 8 2.5 9.5 3 C7 4.5 6.5 7 7 8Z" fill="#f8a020"/></svg>
<div style="position:absolute;left:689px;top:997px;width:215px;height:18px;overflow:hidden;-webkit-mask-image:linear-gradient(90deg,#000 80%,transparent);mask-image:linear-gradient(90deg,#000 80%,transparent)"><div style="position:absolute;left:0;top:0;font-size:13px;line-height:16px;color:#f0f0f0;white-space:pre">Форум вФОСе.ру • Главная страница</div></div>
<div style="position:absolute;left:665px;top:1018px;width:380px;height:1px;background:linear-gradient(90deg,rgba(255,255,255,0),rgba(120,120,120,0.7) 40%,rgba(255,255,255,0))"></div>
<div style="position:absolute;left:1075px;top:1018px;width:130px;height:1px;background:linear-gradient(90deg,rgba(255,255,255,0),rgba(140,140,140,0.8) 50%,rgba(255,255,255,0))"></div>
<svg style="position:absolute;left:1077px;top:996px;overflow:visible" width="23" height="20" viewBox="0 0 23 20"><path d="M1 7 H5 L12 0.5 V19.5 L5 13 H1Z" fill="#d8d8d8" stroke="#909090" stroke-width="0.6"/><rect x="1" y="7" width="4" height="6" fill="#e8b040"/><path d="M15 6 Q17 10 15 14 M17.5 4 Q21 10 17.5 16 M20 2 Q24.5 10 20 18" fill="none" stroke="#30c030" stroke-width="1.3"/></svg>
<svg style="position:absolute;left:1104px;top:995px;overflow:visible" width="20" height="22" viewBox="0 0 20 22"><circle cx="4" cy="3.5" r="3" fill="#f8c010"/><circle cx="16" cy="3.5" r="3" fill="#f8c010"/><circle cx="10" cy="12" r="8.5" fill="#f8b810" stroke="#d08008" stroke-width="0.8"/><circle cx="10" cy="12" r="6" fill="#fff"/><path d="M10 12 L7 8.5 M10 12 L13.5 10" stroke="#000" stroke-width="1.3"/><path d="M4 19 L2.5 21.5 M16 19 L17.5 21.5" stroke="#e89008" stroke-width="2"/></svg>
<svg style="position:absolute;left:1130px;top:996px;overflow:visible" width="21" height="21" viewBox="0 0 21 21"><rect x="4" y="0" width="17" height="14" fill="#3050a0" stroke="#203870" stroke-width="0.6"/><rect x="0.5" y="3.5" width="16" height="13" fill="#3888d8" stroke="#d0d8e0" stroke-width="0.8"/><path d="M5 17 H12 V19 H5Z" fill="#d0d0d0"/><circle cx="15" cy="15.5" r="5.3" fill="#40b040" stroke="#e0f0e0" stroke-width="0.8"/><path d="M12.5 15.5 L14.5 17.5 L17.8 13.2" stroke="#fff" stroke-width="1.5" fill="none"/></svg>
<svg style="position:absolute;left:1155px;top:996px;overflow:visible" width="22" height="21" viewBox="0 0 22 21"><rect x="0" y="0" width="22" height="21" fill="#000"/><rect x="1.5" y="0.5" width="19" height="1.2" fill="#10d010"/><rect x="1.5" y="19" width="19" height="1.2" fill="#10d010"/><path d="M3.5 5 H9.5 V9.5 H3.5 V14.5 H9.5 M12 5 H18 V9.5 H12 V14.5 H18" fill="none" stroke="#10e010" stroke-width="1.5"/></svg>
<svg style="position:absolute;left:1184px;top:998px;overflow:visible" width="17" height="18" viewBox="0 0 17 18"><rect x="0" y="0" width="17" height="18" fill="#303030"/><circle cx="4.5" cy="5" r="3.3" fill="#30b0f0"/><circle cx="12.5" cy="5" r="3.3" fill="#f8c020"/><circle cx="4.5" cy="13" r="3.3" fill="#f02090"/><circle cx="12.5" cy="13" r="3.3" fill="#80c040"/><circle cx="8.5" cy="9" r="1.5" fill="#fff"/></svg>
<div style="position:absolute;left:1207.00px;top:997.75px;font-size:31px;line-height:16px;font-weight:normal;color:#fff;letter-spacing:0.000px;white-space:pre;letter-spacing:-1.6px">22:01</div>
</body></html>
